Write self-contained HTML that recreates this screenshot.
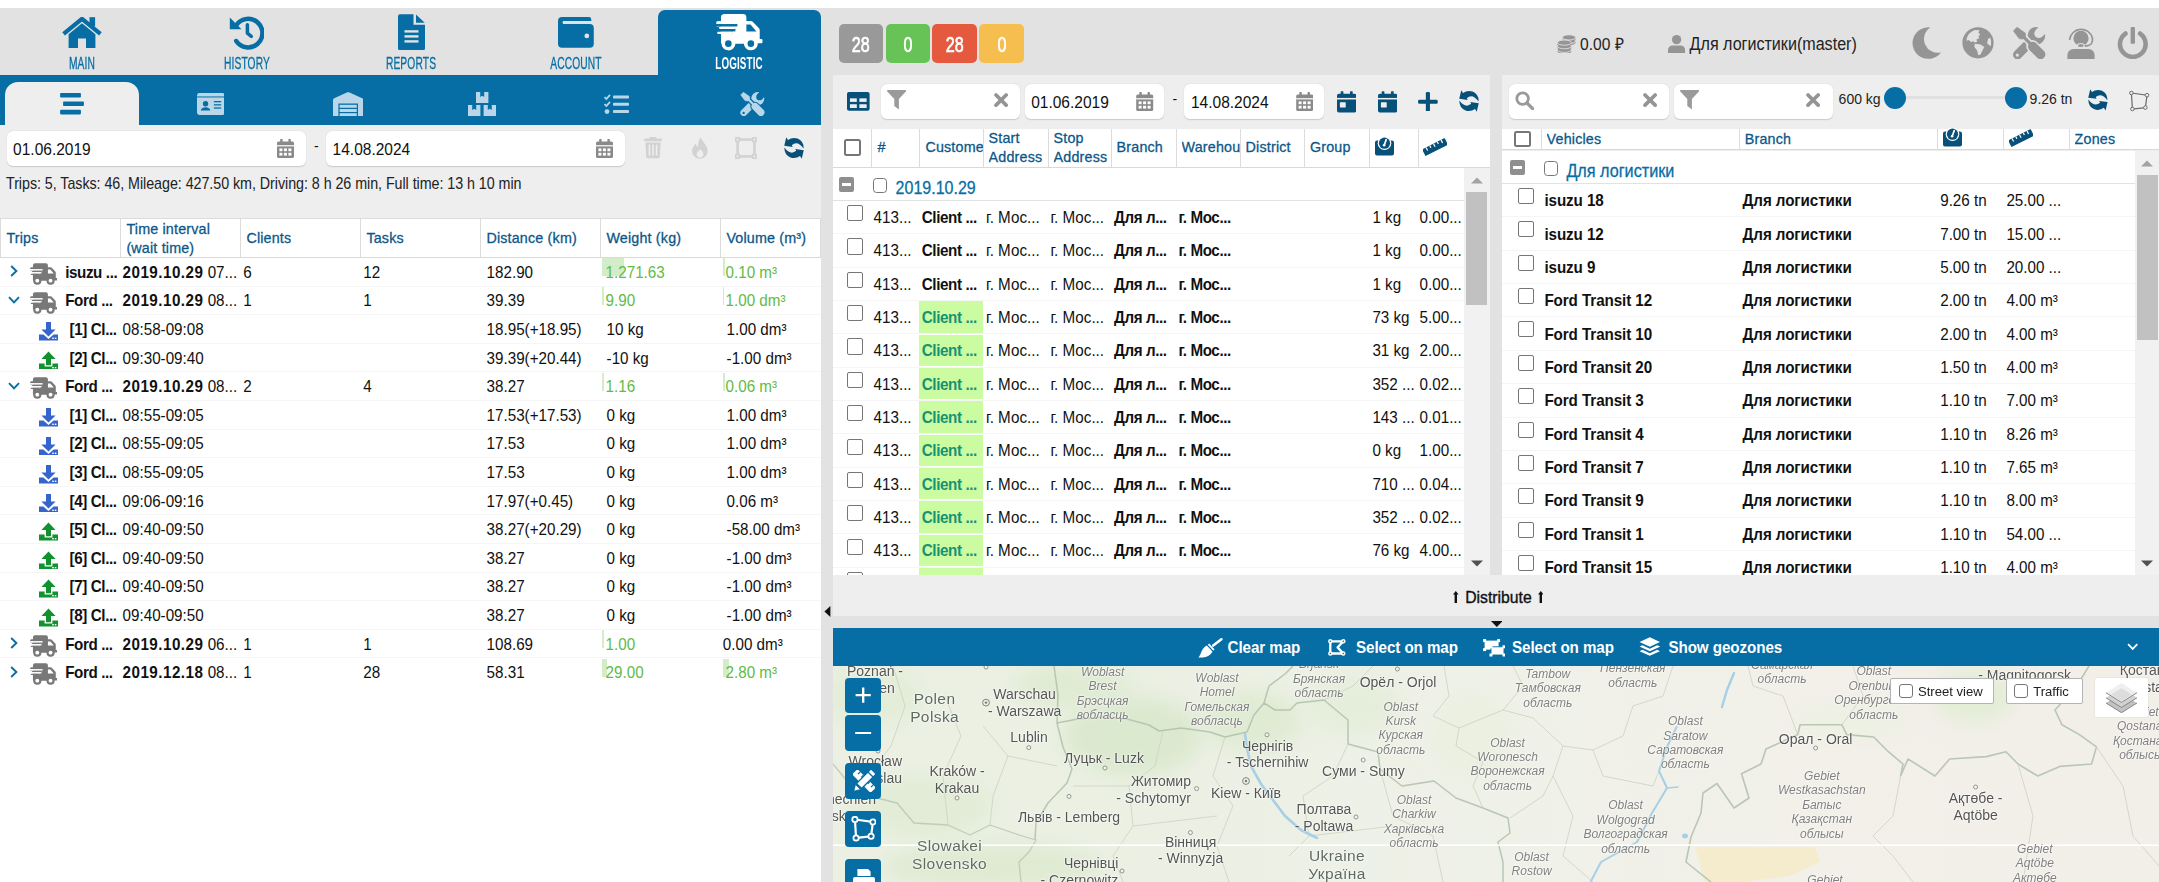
<!DOCTYPE html><html><head><meta charset="utf-8"><title>Logistic</title><style>
*{box-sizing:border-box}
html,body{margin:0;padding:0}
body{width:2159px;height:882px;position:relative;overflow:hidden;background:#fff;font-family:"Liberation Sans",sans-serif;font-size:15.2px;color:#111}
.abs{position:absolute}
.navlbl{position:absolute;top:52.6px;width:164px;text-align:center;font-size:16.4px;line-height:20px;color:#066ea5;-webkit-text-stroke:.3px #066ea5;transform:scaleX(.625);transform-origin:50% 50%;white-space:nowrap;letter-spacing:.2px}
.inp{position:absolute;background:#fff;border:none;box-shadow:0 .5px 1.2px rgba(0,0,0,.16);border-radius:6px;font-size:15.5px;line-height:36px;padding-left:6.6px;color:#111;white-space:nowrap}
.hd{position:absolute;font-size:14.3px;color:#0b5788;-webkit-text-stroke:.28px #0b5788;white-space:nowrap;overflow:hidden;line-height:18.7px;letter-spacing:.18px;transform:translateY(.6px)}
.vl{position:absolute;width:1px;background:#dcdcdc}
.hl{position:absolute;height:1px;background:#f5f5f5}
.c{position:absolute;white-space:nowrap;line-height:20px;font-size:15.2px;transform:translateY(1.3px) scaleY(1.1);transform-origin:0 14.6px}
.b{font-weight:bold;letter-spacing:-.08px}
.e{letter-spacing:-.4px}
.g{color:#62bb46}
.cb{position:absolute;width:16.5px;height:16.5px;border:1.7px solid #767676;border-radius:2.5px;background:#fff}
.cbs{position:absolute;width:14.5px;height:14.5px;border:1.4px solid #767676;border-radius:2.5px;background:#fff}
.badge{position:absolute;top:24px;height:38.5px;width:44px;border-radius:5px;color:#fff;text-align:center;font-size:21.2px;line-height:41px}
.badge span{display:inline-block;transform:scaleX(.76);-webkit-text-stroke:.7px #fff}
.mapbtn{position:absolute;left:845.4px;width:35.5px;height:35.5px;background:#066ea5;border-radius:4px}
.ml{position:absolute;white-space:nowrap;text-align:center;text-shadow:0 0 2px #fff,0 0 2px #fff;color:#555;font-size:14px;line-height:16.5px;transform:translateX(-50%)}
.mi{position:absolute;white-space:nowrap;text-align:center;text-shadow:0 0 2px #fff,0 0 2px #fff;color:#808080;font-style:italic;font-size:12px;line-height:14.4px;transform:translateX(-50%)}
.mb{position:absolute;white-space:nowrap;text-align:center;text-shadow:0 0 2px #fff,0 0 2px #fff;letter-spacing:.4px;color:#5d6b60;font-size:15.5px;line-height:18px;transform:translateX(-50%)}
</style></head><body>
<div class="abs" style="left:0;top:8px;width:2159px;height:67px;background:#e2e2e2"></div>
<div class="abs" style="left:658px;top:10px;width:163px;height:66px;background:#066ea5;border-radius:7px 7px 0 0"></div>
<div class="abs" style="left:0;top:74.6px;width:821px;height:50.4px;background:#066ea5"></div>
<div class="abs" style="left:0;top:125px;width:821px;height:93px;background:#eeeeee"></div>
<svg style="position:absolute;left:62.4px;top:16.8px" width="40" height="31" viewBox="0 0 40 31" ><path d="M20 6.2 L33.4 17.2 V31 H24 V21.5 H16 V31 H6.6 V17.2 Z" fill="#066ea5"/><path d="M1.6 16.8 L20 1.8 L38.4 16.8" fill="none" stroke="#066ea5" stroke-width="4.2" stroke-linejoin="miter"/><rect x="27.5" y="0.2" width="5.6" height="9" fill="#066ea5"/></svg>
<svg style="position:absolute;left:228.6px;top:14.8px" width="35.6" height="35.2" viewBox="0 0 36 36" ><path d="M7.4 10.2 A14.6 14.6 0 1 1 7.2 26.6" fill="none" stroke="#066ea5" stroke-width="4.6" stroke-linecap="round"/><path d="M0.6 2.6 V14.6 H12.6 Z" fill="#066ea5"/><path d="M18.6 10 V18.6 L22.6 21.8" fill="none" stroke="#066ea5" stroke-width="3.6" stroke-linecap="round" stroke-linejoin="round"/></svg>
<svg style="position:absolute;left:398px;top:14px" width="27" height="36.4" viewBox="0 0 27 36" ><path d="M2 0 H15.5 V10.5 H27 V34 a2 2 0 0 1 -2 2 H2 a2 2 0 0 1 -2 -2 V2 a2 2 0 0 1 2 -2 Z" fill="#066ea5"/><path d="M18 0.3 L26.7 8.6 H18 Z" fill="#066ea5"/><rect x="6.5" y="16" width="14" height="2.4" fill="#e2e2e2"/><rect x="6.5" y="21" width="14" height="2.4" fill="#e2e2e2"/><rect x="6.5" y="26" width="14" height="2.4" fill="#e2e2e2"/></svg>
<svg style="position:absolute;left:558px;top:17px" width="35.8" height="30.8" viewBox="0 0 36 31" ><path d="M4 0 H31 a2.5 2.5 0 0 1 2.5 2.5 V4 H5 V7 H32 a4 4 0 0 1 4 4 V27 a4 4 0 0 1 -4 4 H4 a4 4 0 0 1 -4 -4 V4 a4 4 0 0 1 4 -4 Z" fill="#066ea5"/><rect x="4.5" y="4.4" width="29" height="2.2" rx="1.1" fill="#e2e2e2"/><circle cx="29" cy="19" r="2.4" fill="#e2e2e2"/></svg>
<svg style="position:absolute;left:716px;top:14px" width="46.8" height="37" viewBox="0 0 47 37" ><path d="M8 0 H27 a3.5 3.5 0 0 1 3.5 3.5 V7 H35 a3 3 0 0 1 2.1 0.9 L43 14 a3 3 0 0 1 0.9 2.1 V25 H45.5 a1.2 1.2 0 0 1 1.2 1.2 V28 a1.2 1.2 0 0 1 -1.2 1.2 H42 a7 7 0 0 1 -14 0.5 H19.5 a7 7 0 0 1 -14 -0.5 H5 V20 H17 V17.6 H3.5 V15 H19.5 V12.6 H1.5 a1.2 1.2 0 0 1 -1.2 -1.2 V8.4 a1.2 1.2 0 0 1 1.2 -1.2 H5 V3.5 A3.5 3.5 0 0 1 8 0 Z" fill="#fff"/><rect x="1.2" y="7.4" width="20.5" height="2.6" rx="1.3" fill="#fff"/><rect x="3" y="12.4" width="17" height="2.6" rx="1.3" fill="#fff"/><rect x="1.2" y="17.4" width="16" height="2.6" rx="1.3" fill="#fff"/><rect x="2.5" y="10" width="19" height="2.4" fill="#066ea5"/><rect x="2.5" y="15" width="17" height="2.4" fill="#066ea5"/><rect x="0" y="10" width="4.9" height="2.4" fill="#066ea5"/><rect x="0" y="15" width="4.9" height="2.4" fill="#066ea5"/><path d="M30.5 10.5 H34.6 L40.6 17.6 H30.5 Z" fill="#066ea5"/><circle cx="12.4" cy="29.7" r="3.3" fill="#066ea5"/><circle cx="35" cy="29.7" r="3.3" fill="#066ea5"/></svg>
<div class="navlbl" style="left:0.20000000000000284px">MAIN</div>
<div class="navlbl" style="left:164.6px">HISTORY</div>
<div class="navlbl" style="left:329px">REPORTS</div>
<div class="navlbl" style="left:493.6px">ACCOUNT</div>
<div class="navlbl" style="left:657.4px;color:#fff;-webkit-text-stroke:0;font-weight:bold;transform:scaleX(.6)">LOGISTIC</div>
<div class="abs" style="left:5px;top:81.8px;width:134px;height:44px;background:#eeeeee;border-radius:13px 13px 0 0"></div>
<svg style="position:absolute;left:60px;top:93.2px" width="24" height="21.4" viewBox="0 0 24 21.6" ><rect x="0" y="0" width="21" height="4.6" rx="0.8" fill="#066ea5"/><rect x="3" y="8.5" width="21" height="4.6" rx="0.8" fill="#066ea5"/><rect x="0" y="17" width="21" height="4.6" rx="0.8" fill="#066ea5"/></svg>
<svg style="position:absolute;left:196.5px;top:93px" width="27.8" height="22" viewBox="0 0 28 22" ><rect x="0" y="0" width="28" height="22" rx="2.4" fill="#b9d7e9"/><rect x="0" y="3.4" width="28" height="1" fill="#066ea5"/><circle cx="8.6" cy="10.8" r="2.7" fill="#066ea5"/><path d="M3.8 17.6 a4.8 3.4 0 0 1 9.6 0 Z" fill="#066ea5"/><rect x="17" y="8" width="7.4" height="1.3" fill="#066ea5"/><rect x="17" y="11.2" width="7.4" height="1.3" fill="#066ea5"/><rect x="17" y="14.4" width="7.4" height="1.3" fill="#066ea5"/></svg>
<svg style="position:absolute;left:333px;top:91.6px" width="30.4" height="24.5" viewBox="0 0 30.4 24.5" ><path d="M0 24.5 V8 a2 2 0 0 1 1.2 -1.8 L14.4 0.3 a2 2 0 0 1 1.6 0 L29.2 6.2 A2 2 0 0 1 30.4 8 V24.5 H25 V11.5 H5.4 V24.5 Z" fill="#b9d7e9"/><rect x="6.6" y="12.8" width="17.2" height="3" fill="#b9d7e9"/><rect x="6.6" y="17" width="17.2" height="3" fill="#b9d7e9"/><rect x="6.6" y="21.2" width="17.2" height="3.3" fill="#b9d7e9"/></svg>
<svg style="position:absolute;left:468px;top:92px" width="28" height="24" viewBox="0 0 28 24" ><path d="M8 0 h4.2 v5 l2 -1.2 l2 1.2 v-5 h4.2 v11 h-12.4 Z" fill="#b9d7e9"/><path d="M0 13 h4.2 v5 l2 -1.2 l2 1.2 v-5 h4.2 v11 h-12.4 Z" fill="#b9d7e9"/><path d="M15.6 13 h4.2 v5 l2 -1.2 l2 1.2 v-5 h4.2 v11 h-12.4 Z" fill="#b9d7e9"/></svg>
<svg style="position:absolute;left:604px;top:94.2px" width="25" height="20" viewBox="0 0 25 20" ><rect x="9" y="1.6" width="16" height="3" rx="0.8" fill="#b9d7e9"/><rect x="9" y="8.8" width="16" height="3" rx="0.8" fill="#b9d7e9"/><rect x="9" y="16" width="16" height="3" rx="0.8" fill="#b9d7e9"/><path d="M0.6 3 L2.4 5 L6 0.8" fill="none" stroke="#b9d7e9" stroke-width="1.8"/><path d="M0.6 10 L2.4 12 L6 7.8" fill="none" stroke="#b9d7e9" stroke-width="1.8"/><circle cx="3" cy="17.6" r="2.4" fill="#b9d7e9"/></svg>
<svg style="position:absolute;left:740px;top:92px" width="25" height="24" viewBox="0 0 32.6 32.3" ><path d="M4.6 27.8 L21 11.2" stroke="#b9d7e9" stroke-width="9.2" stroke-linecap="round" fill="none"/><circle cx="23.4" cy="8.8" r="8.8" fill="#b9d7e9"/><circle cx="25.8" cy="6.6" r="4.5" fill="#066ea5"/><path d="M22.4 3.6 L27.2 -2 L34 5 L28.8 10 Z" fill="#066ea5"/><circle cx="4.3" cy="28.1" r="1.6" fill="#066ea5"/><path d="M10 9 L19.4 18.8" stroke="#066ea5" stroke-width="6.4" fill="none"/><path d="M19.4 19.2 L27.8 27.6" stroke="#066ea5" stroke-width="12.4" stroke-linecap="round" fill="none"/><path d="M4 0.3 L12.3 6.2 V9.6 L9.6 12 L6.2 11.6 L0.5 3.9 Z" fill="#b9d7e9" stroke="#b9d7e9" stroke-width="0.8" stroke-linejoin="round"/><path d="M10.6 9.8 L19.4 18.8" stroke="#b9d7e9" stroke-width="3.2" fill="none"/><path d="M19.8 19.6 L27.6 27.4" stroke="#b9d7e9" stroke-width="9.6" stroke-linecap="round" fill="none"/></svg>
<div class="inp" style="left:6.5px;top:131.2px;width:299px;height:35.2px"></div><div class="c" style="left:13.1px;top:138.9px;font-size:15.5px">01.06.2019</div>
<div class="inp" style="left:326px;top:131.2px;width:298.5px;height:35.2px"></div><div class="c" style="left:332.6px;top:138.9px;font-size:15.5px">14.08.2024</div>
<svg style="position:absolute;left:277px;top:139.4px" width="17" height="19" viewBox="0 0 17 19" ><rect x="0" y="2.4" width="17" height="16.6" rx="1.6" fill="#8a8a8a"/><rect x="3.2" y="0" width="2.4" height="4.6" rx="0.6" fill="#8a8a8a"/><rect x="11.4" y="0" width="2.4" height="4.6" rx="0.6" fill="#8a8a8a"/><rect x="0" y="6.2" width="17" height="1.2" fill="#fff"/><rect x="2.4" y="9.4" width="3" height="2.8" fill="#fff"/><rect x="6.9" y="9.4" width="3" height="2.8" fill="#fff"/><rect x="11.4" y="9.4" width="3" height="2.8" fill="#fff"/><rect x="2.4" y="13.8" width="3" height="2.8" fill="#fff"/><rect x="6.9" y="13.8" width="3" height="2.8" fill="#fff"/><rect x="11.4" y="13.8" width="3" height="2.8" fill="#fff"/></svg>
<svg style="position:absolute;left:596.4px;top:139.4px" width="17" height="19" viewBox="0 0 17 19" ><rect x="0" y="2.4" width="17" height="16.6" rx="1.6" fill="#8a8a8a"/><rect x="3.2" y="0" width="2.4" height="4.6" rx="0.6" fill="#8a8a8a"/><rect x="11.4" y="0" width="2.4" height="4.6" rx="0.6" fill="#8a8a8a"/><rect x="0" y="6.2" width="17" height="1.2" fill="#fff"/><rect x="2.4" y="9.4" width="3" height="2.8" fill="#fff"/><rect x="6.9" y="9.4" width="3" height="2.8" fill="#fff"/><rect x="11.4" y="9.4" width="3" height="2.8" fill="#fff"/><rect x="2.4" y="13.8" width="3" height="2.8" fill="#fff"/><rect x="6.9" y="13.8" width="3" height="2.8" fill="#fff"/><rect x="11.4" y="13.8" width="3" height="2.8" fill="#fff"/></svg>
<div class="c" style="left:314px;top:135px;font-size:14px">-</div>
<svg style="position:absolute;left:644px;top:137.2px" width="18" height="21.4" viewBox="0 0 18 21.4" ><rect x="0" y="1.6" width="18" height="2.6" rx="0.8" fill="#d2d2d2"/><rect x="5.6" y="0" width="6.8" height="2.6" rx="0.8" fill="#d2d2d2"/><path d="M1.4 5.6 H16.6 L15.8 19.6 a1.6 1.6 0 0 1 -1.6 1.6 H3.8 a1.6 1.6 0 0 1 -1.6 -1.6 Z" fill="#d2d2d2"/><rect x="4.6" y="7.6" width="1.6" height="11" fill="#eeeeee"/><rect x="8.2" y="7.6" width="1.6" height="11" fill="#eeeeee"/><rect x="11.8" y="7.6" width="1.6" height="11" fill="#eeeeee"/></svg>
<svg style="position:absolute;left:692px;top:137px" width="15.6" height="21.8" viewBox="0 0 15.6 21.8" ><path d="M8.6 0 C9.4 4 15.6 8 15.6 14 A7.8 7.8 0 0 1 0 14 C0 10.6 2.2 8.2 4 6.4 C4.2 8.6 5 9.6 6 10.2 C6 6 7 2.6 8.6 0 Z" fill="#d2d2d2"/><path d="M8.2 12 C10.4 14 11.4 15.4 11.4 17 A3.4 3.4 0 0 1 4.6 17 C4.6 15.4 6.6 14.6 8.2 12 Z" fill="#eeeeee"/></svg>
<svg style="position:absolute;left:735.4px;top:137px" width="22" height="22" viewBox="0 0 22 22" ><rect x="2.6" y="2.6" width="16.8" height="16.8" fill="none" stroke="#d2d2d2" stroke-width="2.6"/><rect x="0" y="0" width="5.2" height="5.2" rx="0.8" fill="#d2d2d2"/><rect x="1.7" y="1.7" width="1.8" height="1.8" fill="#eeeeee"/><rect x="16.8" y="0" width="5.2" height="5.2" rx="0.8" fill="#d2d2d2"/><rect x="18.5" y="1.7" width="1.8" height="1.8" fill="#eeeeee"/><rect x="0" y="16.8" width="5.2" height="5.2" rx="0.8" fill="#d2d2d2"/><rect x="1.7" y="18.5" width="1.8" height="1.8" fill="#eeeeee"/><rect x="16.8" y="16.8" width="5.2" height="5.2" rx="0.8" fill="#d2d2d2"/><rect x="18.5" y="18.5" width="1.8" height="1.8" fill="#eeeeee"/></svg>
<svg style="position:absolute;left:783.6px;top:137px" width="20" height="22" viewBox="0 0 19.8 21.9" ><path d="M2.2 0.2 L0.2 8.8 L8.6 9.9 L7.7 8.1 Q11.6 4.8 15.8 7.6 Q18 9.2 19.4 11.4 Q19.9 4.4 13.4 1.5 Q8.4 -0.2 3.9 3 Z" fill="#07507a"/><path d="M2.2 0.2 L0.2 8.8 L8.6 9.9 L7.7 8.1 Q11.6 4.8 15.8 7.6 Q18 9.2 19.4 11.4 Q19.9 4.4 13.4 1.5 Q8.4 -0.2 3.9 3 Z" fill="#07507a" transform="rotate(180 9.9 10.95)"/></svg>
<div class="c" style="left:6px;top:173px;font-size:14.3px;color:#222;letter-spacing:-.05px">Trips: 5, Tasks: 46, Mileage: 427.50 km, Driving: 8 h 26 min, Full time: 13 h 10 min</div>
<div class="abs" style="left:0;top:218px;width:821px;height:39.6px;background:#fff;border-top:1px solid #dcdcdc;border-bottom:1.6px solid #d9d9d9"></div>
<div class="vl" style="left:0px;top:218px;height:39px"></div>
<div class="vl" style="left:120px;top:218px;height:39px"></div>
<div class="vl" style="left:240px;top:218px;height:39px"></div>
<div class="vl" style="left:360px;top:218px;height:39px"></div>
<div class="vl" style="left:480px;top:218px;height:39px"></div>
<div class="vl" style="left:600px;top:218px;height:39px"></div>
<div class="vl" style="left:720px;top:218px;height:39px"></div>
<div class="vl" style="left:820px;top:218px;height:39px"></div>
<div class="hd" style="left:6.4px;top:228.4px">Trips</div>
<div class="hd" style="left:126.4px;top:219.4px">Time interval<br>(wait time)</div>
<div class="hd" style="left:246.4px;top:228.4px">Clients</div>
<div class="hd" style="left:366.4px;top:228.4px">Tasks</div>
<div class="hd" style="left:486.4px;top:228.4px">Distance (km)</div>
<div class="hd" style="left:606.4px;top:228.4px">Weight (kg)</div>
<div class="hd" style="left:726.4px;top:228.4px">Volume (m³)</div>
<div class="hl" style="left:0;top:285.6px;width:821px"></div>
<svg style="position:absolute;left:9.6px;top:265.20000000000005px" width="8" height="12" viewBox="0 0 8 12" ><path d="M1.2 1 L6.4 6 L1.2 11" fill="none" stroke="#066ea5" stroke-width="1.9"/></svg>
<svg style="position:absolute;left:29.8px;top:263.0px" width="27.6" height="22.2" viewBox="0 0 47 37" ><path d="M8 0 H27 a3.5 3.5 0 0 1 3.5 3.5 V7 H35 a3 3 0 0 1 2.1 0.9 L43 14 a3 3 0 0 1 0.9 2.1 V25 H45.5 a1.2 1.2 0 0 1 1.2 1.2 V28 a1.2 1.2 0 0 1 -1.2 1.2 H42 a7 7 0 0 1 -14 0.5 H19.5 a7 7 0 0 1 -14 -0.5 H5 V20 H17 V17.6 H3.5 V15 H19.5 V12.6 H1.5 a1.2 1.2 0 0 1 -1.2 -1.2 V8.4 a1.2 1.2 0 0 1 1.2 -1.2 H5 V3.5 A3.5 3.5 0 0 1 8 0 Z" fill="#787878"/><rect x="1.2" y="7.4" width="20.5" height="2.6" rx="1.3" fill="#787878"/><rect x="3" y="12.4" width="17" height="2.6" rx="1.3" fill="#787878"/><rect x="1.2" y="17.4" width="16" height="2.6" rx="1.3" fill="#787878"/><rect x="2.5" y="10" width="19" height="2.4" fill="#fff"/><rect x="2.5" y="15" width="17" height="2.4" fill="#fff"/><rect x="0" y="10" width="4.9" height="2.4" fill="#fff"/><rect x="0" y="15" width="4.9" height="2.4" fill="#fff"/><path d="M30.5 10.5 H34.6 L40.6 17.6 H30.5 Z" fill="#fff"/><circle cx="12.4" cy="29.7" r="3.3" fill="#fff"/><circle cx="35" cy="29.7" r="3.3" fill="#fff"/></svg>
<div class="c b e" style="left:65.2px;top:261.8px">isuzu ...</div>
<div class="c" style="left:122.6px;top:261.8px"><b style="letter-spacing:.48px">2019.10.29</b> 07...</div>
<div class="c" style="left:243.2px;top:261.8px">6</div>
<div class="c" style="left:363.2px;top:261.8px">12</div>
<div class="c" style="left:486.6px;top:261.8px">182.90</div>
<div class="abs" style="left:602.4px;top:258.2px;width:22px;height:18px;background:#d3ecc9"></div>
<div class="c g" style="left:605.6px;top:261.8px">1.271.63</div>
<div class="abs" style="left:722.6px;top:258.2px;width:2px;height:18px;background:#d3ecc9"></div>
<div class="c g" style="left:725.6px;top:261.8px">0.10 m³</div>
<div class="hl" style="left:0;top:314.2px;width:821px"></div>
<svg style="position:absolute;left:7.6px;top:296.20000000000005px" width="12" height="8" viewBox="0 0 12 8" ><path d="M1 1.2 L6 6.4 L11 1.2" fill="none" stroke="#066ea5" stroke-width="1.9"/></svg>
<svg style="position:absolute;left:29.8px;top:291.6px" width="27.6" height="22.2" viewBox="0 0 47 37" ><path d="M8 0 H27 a3.5 3.5 0 0 1 3.5 3.5 V7 H35 a3 3 0 0 1 2.1 0.9 L43 14 a3 3 0 0 1 0.9 2.1 V25 H45.5 a1.2 1.2 0 0 1 1.2 1.2 V28 a1.2 1.2 0 0 1 -1.2 1.2 H42 a7 7 0 0 1 -14 0.5 H19.5 a7 7 0 0 1 -14 -0.5 H5 V20 H17 V17.6 H3.5 V15 H19.5 V12.6 H1.5 a1.2 1.2 0 0 1 -1.2 -1.2 V8.4 a1.2 1.2 0 0 1 1.2 -1.2 H5 V3.5 A3.5 3.5 0 0 1 8 0 Z" fill="#787878"/><rect x="1.2" y="7.4" width="20.5" height="2.6" rx="1.3" fill="#787878"/><rect x="3" y="12.4" width="17" height="2.6" rx="1.3" fill="#787878"/><rect x="1.2" y="17.4" width="16" height="2.6" rx="1.3" fill="#787878"/><rect x="2.5" y="10" width="19" height="2.4" fill="#fff"/><rect x="2.5" y="15" width="17" height="2.4" fill="#fff"/><rect x="0" y="10" width="4.9" height="2.4" fill="#fff"/><rect x="0" y="15" width="4.9" height="2.4" fill="#fff"/><path d="M30.5 10.5 H34.6 L40.6 17.6 H30.5 Z" fill="#fff"/><circle cx="12.4" cy="29.7" r="3.3" fill="#fff"/><circle cx="35" cy="29.7" r="3.3" fill="#fff"/></svg>
<div class="c b e" style="left:65.2px;top:290.4px">Ford ...</div>
<div class="c" style="left:122.6px;top:290.4px"><b style="letter-spacing:.48px">2019.10.29</b> 08...</div>
<div class="c" style="left:243.2px;top:290.4px">1</div>
<div class="c" style="left:363.2px;top:290.4px">1</div>
<div class="c" style="left:486.6px;top:290.4px">39.39</div>
<div class="abs" style="left:602.4px;top:286.8px;width:1.4px;height:18px;background:#d3ecc9"></div>
<div class="c g" style="left:605.6px;top:290.4px">9.90</div>
<div class="abs" style="left:722.6px;top:286.8px;width:1.4px;height:18px;background:#d3ecc9"></div>
<div class="c g" style="left:725.6px;top:290.4px">1.00 dm³</div>
<div class="hl" style="left:0;top:342.8px;width:821px"></div>
<svg style="position:absolute;left:38.8px;top:322.2px" width="19" height="18.6" viewBox="0 0 19 18.6" ><path d="M7 0 H12 V7.4 H16.6 L9.5 14.6 L2.4 7.4 H7 Z" fill="#3564cd"/><path d="M0 12.6 H4.4 L9.5 17 L14.6 12.6 H19 V18.6 H0 Z" fill="#3564cd"/><rect x="13.2" y="15.6" width="1.6" height="1.4" fill="#fff"/><rect x="15.8" y="15.6" width="1.6" height="1.4" fill="#fff"/></svg>
<div class="c b e" style="left:69.6px;top:319.0px">[1] Cl...</div>
<div class="c" style="left:122.6px;top:319.0px">08:58-09:08</div>
<div class="c" style="left:486.6px;top:319.0px">18.95(+18.95)</div>
<div class="c" style="left:606.6px;top:319.0px">10 kg</div>
<div class="c" style="left:726.6px;top:319.0px">1.00 dm³</div>
<div class="hl" style="left:0;top:371.4px;width:821px"></div>
<svg style="position:absolute;left:38.8px;top:350.6px" width="19" height="18.6" viewBox="0 0 19 18.6" ><path d="M7 14.2 H12 V8 H16.6 L9.5 0.4 L2.4 8 H7 Z" fill="#12922e"/><path d="M0 12.6 H5.6 V15.6 H13.4 V12.6 H19 V18.6 H0 Z" fill="#12922e"/><rect x="13.2" y="16" width="1.6" height="1.4" fill="#fff"/><rect x="15.8" y="16" width="1.6" height="1.4" fill="#fff"/></svg>
<div class="c b e" style="left:69.6px;top:347.6px">[2] Cl...</div>
<div class="c" style="left:122.6px;top:347.6px">09:30-09:40</div>
<div class="c" style="left:486.6px;top:347.6px">39.39(+20.44)</div>
<div class="c" style="left:606.6px;top:347.6px">-10 kg</div>
<div class="c" style="left:726.6px;top:347.6px">-1.00 dm³</div>
<div class="hl" style="left:0;top:400.0px;width:821px"></div>
<svg style="position:absolute;left:7.6px;top:382.0px" width="12" height="8" viewBox="0 0 12 8" ><path d="M1 1.2 L6 6.4 L11 1.2" fill="none" stroke="#066ea5" stroke-width="1.9"/></svg>
<svg style="position:absolute;left:29.8px;top:377.4px" width="27.6" height="22.2" viewBox="0 0 47 37" ><path d="M8 0 H27 a3.5 3.5 0 0 1 3.5 3.5 V7 H35 a3 3 0 0 1 2.1 0.9 L43 14 a3 3 0 0 1 0.9 2.1 V25 H45.5 a1.2 1.2 0 0 1 1.2 1.2 V28 a1.2 1.2 0 0 1 -1.2 1.2 H42 a7 7 0 0 1 -14 0.5 H19.5 a7 7 0 0 1 -14 -0.5 H5 V20 H17 V17.6 H3.5 V15 H19.5 V12.6 H1.5 a1.2 1.2 0 0 1 -1.2 -1.2 V8.4 a1.2 1.2 0 0 1 1.2 -1.2 H5 V3.5 A3.5 3.5 0 0 1 8 0 Z" fill="#787878"/><rect x="1.2" y="7.4" width="20.5" height="2.6" rx="1.3" fill="#787878"/><rect x="3" y="12.4" width="17" height="2.6" rx="1.3" fill="#787878"/><rect x="1.2" y="17.4" width="16" height="2.6" rx="1.3" fill="#787878"/><rect x="2.5" y="10" width="19" height="2.4" fill="#fff"/><rect x="2.5" y="15" width="17" height="2.4" fill="#fff"/><rect x="0" y="10" width="4.9" height="2.4" fill="#fff"/><rect x="0" y="15" width="4.9" height="2.4" fill="#fff"/><path d="M30.5 10.5 H34.6 L40.6 17.6 H30.5 Z" fill="#fff"/><circle cx="12.4" cy="29.7" r="3.3" fill="#fff"/><circle cx="35" cy="29.7" r="3.3" fill="#fff"/></svg>
<div class="c b e" style="left:65.2px;top:376.2px">Ford ...</div>
<div class="c" style="left:122.6px;top:376.2px"><b style="letter-spacing:.48px">2019.10.29</b> 08...</div>
<div class="c" style="left:243.2px;top:376.2px">2</div>
<div class="c" style="left:363.2px;top:376.2px">4</div>
<div class="c" style="left:486.6px;top:376.2px">38.27</div>
<div class="abs" style="left:602.4px;top:372.6px;width:1.4px;height:18px;background:#d3ecc9"></div>
<div class="c g" style="left:605.6px;top:376.2px">1.16</div>
<div class="abs" style="left:722.6px;top:372.6px;width:2px;height:18px;background:#d3ecc9"></div>
<div class="c g" style="left:725.6px;top:376.2px">0.06 m³</div>
<div class="hl" style="left:0;top:428.6px;width:821px"></div>
<svg style="position:absolute;left:38.8px;top:408.0px" width="19" height="18.6" viewBox="0 0 19 18.6" ><path d="M7 0 H12 V7.4 H16.6 L9.5 14.6 L2.4 7.4 H7 Z" fill="#3564cd"/><path d="M0 12.6 H4.4 L9.5 17 L14.6 12.6 H19 V18.6 H0 Z" fill="#3564cd"/><rect x="13.2" y="15.6" width="1.6" height="1.4" fill="#fff"/><rect x="15.8" y="15.6" width="1.6" height="1.4" fill="#fff"/></svg>
<div class="c b e" style="left:69.6px;top:404.8px">[1] Cl...</div>
<div class="c" style="left:122.6px;top:404.8px">08:55-09:05</div>
<div class="c" style="left:486.6px;top:404.8px">17.53(+17.53)</div>
<div class="c" style="left:606.6px;top:404.8px">0 kg</div>
<div class="c" style="left:726.6px;top:404.8px">1.00 dm³</div>
<div class="hl" style="left:0;top:457.2px;width:821px"></div>
<svg style="position:absolute;left:38.8px;top:436.6px" width="19" height="18.6" viewBox="0 0 19 18.6" ><path d="M7 0 H12 V7.4 H16.6 L9.5 14.6 L2.4 7.4 H7 Z" fill="#3564cd"/><path d="M0 12.6 H4.4 L9.5 17 L14.6 12.6 H19 V18.6 H0 Z" fill="#3564cd"/><rect x="13.2" y="15.6" width="1.6" height="1.4" fill="#fff"/><rect x="15.8" y="15.6" width="1.6" height="1.4" fill="#fff"/></svg>
<div class="c b e" style="left:69.6px;top:433.4px">[2] Cl...</div>
<div class="c" style="left:122.6px;top:433.4px">08:55-09:05</div>
<div class="c" style="left:486.6px;top:433.4px">17.53</div>
<div class="c" style="left:606.6px;top:433.4px">0 kg</div>
<div class="c" style="left:726.6px;top:433.4px">1.00 dm³</div>
<div class="hl" style="left:0;top:485.8px;width:821px"></div>
<svg style="position:absolute;left:38.8px;top:465.20000000000005px" width="19" height="18.6" viewBox="0 0 19 18.6" ><path d="M7 0 H12 V7.4 H16.6 L9.5 14.6 L2.4 7.4 H7 Z" fill="#3564cd"/><path d="M0 12.6 H4.4 L9.5 17 L14.6 12.6 H19 V18.6 H0 Z" fill="#3564cd"/><rect x="13.2" y="15.6" width="1.6" height="1.4" fill="#fff"/><rect x="15.8" y="15.6" width="1.6" height="1.4" fill="#fff"/></svg>
<div class="c b e" style="left:69.6px;top:462.0px">[3] Cl...</div>
<div class="c" style="left:122.6px;top:462.0px">08:55-09:05</div>
<div class="c" style="left:486.6px;top:462.0px">17.53</div>
<div class="c" style="left:606.6px;top:462.0px">0 kg</div>
<div class="c" style="left:726.6px;top:462.0px">1.00 dm³</div>
<div class="hl" style="left:0;top:514.4px;width:821px"></div>
<svg style="position:absolute;left:38.8px;top:493.8px" width="19" height="18.6" viewBox="0 0 19 18.6" ><path d="M7 0 H12 V7.4 H16.6 L9.5 14.6 L2.4 7.4 H7 Z" fill="#3564cd"/><path d="M0 12.6 H4.4 L9.5 17 L14.6 12.6 H19 V18.6 H0 Z" fill="#3564cd"/><rect x="13.2" y="15.6" width="1.6" height="1.4" fill="#fff"/><rect x="15.8" y="15.6" width="1.6" height="1.4" fill="#fff"/></svg>
<div class="c b e" style="left:69.6px;top:490.6px">[4] Cl...</div>
<div class="c" style="left:122.6px;top:490.6px">09:06-09:16</div>
<div class="c" style="left:486.6px;top:490.6px">17.97(+0.45)</div>
<div class="c" style="left:606.6px;top:490.6px">0 kg</div>
<div class="c" style="left:726.6px;top:490.6px">0.06 m³</div>
<div class="hl" style="left:0;top:543.0px;width:821px"></div>
<svg style="position:absolute;left:38.8px;top:522.2px" width="19" height="18.6" viewBox="0 0 19 18.6" ><path d="M7 14.2 H12 V8 H16.6 L9.5 0.4 L2.4 8 H7 Z" fill="#12922e"/><path d="M0 12.6 H5.6 V15.6 H13.4 V12.6 H19 V18.6 H0 Z" fill="#12922e"/><rect x="13.2" y="16" width="1.6" height="1.4" fill="#fff"/><rect x="15.8" y="16" width="1.6" height="1.4" fill="#fff"/></svg>
<div class="c b e" style="left:69.6px;top:519.2px">[5] Cl...</div>
<div class="c" style="left:122.6px;top:519.2px">09:40-09:50</div>
<div class="c" style="left:486.6px;top:519.2px">38.27(+20.29)</div>
<div class="c" style="left:606.6px;top:519.2px">0 kg</div>
<div class="c" style="left:726.6px;top:519.2px">-58.00 dm³</div>
<div class="hl" style="left:0;top:571.6px;width:821px"></div>
<svg style="position:absolute;left:38.8px;top:550.8000000000001px" width="19" height="18.6" viewBox="0 0 19 18.6" ><path d="M7 14.2 H12 V8 H16.6 L9.5 0.4 L2.4 8 H7 Z" fill="#12922e"/><path d="M0 12.6 H5.6 V15.6 H13.4 V12.6 H19 V18.6 H0 Z" fill="#12922e"/><rect x="13.2" y="16" width="1.6" height="1.4" fill="#fff"/><rect x="15.8" y="16" width="1.6" height="1.4" fill="#fff"/></svg>
<div class="c b e" style="left:69.6px;top:547.8px">[6] Cl...</div>
<div class="c" style="left:122.6px;top:547.8px">09:40-09:50</div>
<div class="c" style="left:486.6px;top:547.8px">38.27</div>
<div class="c" style="left:606.6px;top:547.8px">0 kg</div>
<div class="c" style="left:726.6px;top:547.8px">-1.00 dm³</div>
<div class="hl" style="left:0;top:600.2px;width:821px"></div>
<svg style="position:absolute;left:38.8px;top:579.4000000000001px" width="19" height="18.6" viewBox="0 0 19 18.6" ><path d="M7 14.2 H12 V8 H16.6 L9.5 0.4 L2.4 8 H7 Z" fill="#12922e"/><path d="M0 12.6 H5.6 V15.6 H13.4 V12.6 H19 V18.6 H0 Z" fill="#12922e"/><rect x="13.2" y="16" width="1.6" height="1.4" fill="#fff"/><rect x="15.8" y="16" width="1.6" height="1.4" fill="#fff"/></svg>
<div class="c b e" style="left:69.6px;top:576.4px">[7] Cl...</div>
<div class="c" style="left:122.6px;top:576.4px">09:40-09:50</div>
<div class="c" style="left:486.6px;top:576.4px">38.27</div>
<div class="c" style="left:606.6px;top:576.4px">0 kg</div>
<div class="c" style="left:726.6px;top:576.4px">-1.00 dm³</div>
<div class="hl" style="left:0;top:628.8px;width:821px"></div>
<svg style="position:absolute;left:38.8px;top:608.0000000000001px" width="19" height="18.6" viewBox="0 0 19 18.6" ><path d="M7 14.2 H12 V8 H16.6 L9.5 0.4 L2.4 8 H7 Z" fill="#12922e"/><path d="M0 12.6 H5.6 V15.6 H13.4 V12.6 H19 V18.6 H0 Z" fill="#12922e"/><rect x="13.2" y="16" width="1.6" height="1.4" fill="#fff"/><rect x="15.8" y="16" width="1.6" height="1.4" fill="#fff"/></svg>
<div class="c b e" style="left:69.6px;top:605.0px">[8] Cl...</div>
<div class="c" style="left:122.6px;top:605.0px">09:40-09:50</div>
<div class="c" style="left:486.6px;top:605.0px">38.27</div>
<div class="c" style="left:606.6px;top:605.0px">0 kg</div>
<div class="c" style="left:726.6px;top:605.0px">-1.00 dm³</div>
<div class="hl" style="left:0;top:657.4px;width:821px"></div>
<svg style="position:absolute;left:9.6px;top:637.0000000000001px" width="8" height="12" viewBox="0 0 8 12" ><path d="M1.2 1 L6.4 6 L1.2 11" fill="none" stroke="#066ea5" stroke-width="1.9"/></svg>
<svg style="position:absolute;left:29.8px;top:634.8000000000001px" width="27.6" height="22.2" viewBox="0 0 47 37" ><path d="M8 0 H27 a3.5 3.5 0 0 1 3.5 3.5 V7 H35 a3 3 0 0 1 2.1 0.9 L43 14 a3 3 0 0 1 0.9 2.1 V25 H45.5 a1.2 1.2 0 0 1 1.2 1.2 V28 a1.2 1.2 0 0 1 -1.2 1.2 H42 a7 7 0 0 1 -14 0.5 H19.5 a7 7 0 0 1 -14 -0.5 H5 V20 H17 V17.6 H3.5 V15 H19.5 V12.6 H1.5 a1.2 1.2 0 0 1 -1.2 -1.2 V8.4 a1.2 1.2 0 0 1 1.2 -1.2 H5 V3.5 A3.5 3.5 0 0 1 8 0 Z" fill="#787878"/><rect x="1.2" y="7.4" width="20.5" height="2.6" rx="1.3" fill="#787878"/><rect x="3" y="12.4" width="17" height="2.6" rx="1.3" fill="#787878"/><rect x="1.2" y="17.4" width="16" height="2.6" rx="1.3" fill="#787878"/><rect x="2.5" y="10" width="19" height="2.4" fill="#fff"/><rect x="2.5" y="15" width="17" height="2.4" fill="#fff"/><rect x="0" y="10" width="4.9" height="2.4" fill="#fff"/><rect x="0" y="15" width="4.9" height="2.4" fill="#fff"/><path d="M30.5 10.5 H34.6 L40.6 17.6 H30.5 Z" fill="#fff"/><circle cx="12.4" cy="29.7" r="3.3" fill="#fff"/><circle cx="35" cy="29.7" r="3.3" fill="#fff"/></svg>
<div class="c b e" style="left:65.2px;top:633.6px">Ford ...</div>
<div class="c" style="left:122.6px;top:633.6px"><b style="letter-spacing:.48px">2019.10.29</b> 06...</div>
<div class="c" style="left:243.2px;top:633.6px">1</div>
<div class="c" style="left:363.2px;top:633.6px">1</div>
<div class="c" style="left:486.6px;top:633.6px">108.69</div>
<div class="abs" style="left:602.4px;top:630.0px;width:1.4px;height:18px;background:#d3ecc9"></div>
<div class="c g" style="left:605.6px;top:633.6px">1.00</div>
<div class="c" style="left:722.8px;top:633.6px">0.00 dm³</div>
<svg style="position:absolute;left:9.6px;top:665.6px" width="8" height="12" viewBox="0 0 8 12" ><path d="M1.2 1 L6.4 6 L1.2 11" fill="none" stroke="#066ea5" stroke-width="1.9"/></svg>
<svg style="position:absolute;left:29.8px;top:663.4px" width="27.6" height="22.2" viewBox="0 0 47 37" ><path d="M8 0 H27 a3.5 3.5 0 0 1 3.5 3.5 V7 H35 a3 3 0 0 1 2.1 0.9 L43 14 a3 3 0 0 1 0.9 2.1 V25 H45.5 a1.2 1.2 0 0 1 1.2 1.2 V28 a1.2 1.2 0 0 1 -1.2 1.2 H42 a7 7 0 0 1 -14 0.5 H19.5 a7 7 0 0 1 -14 -0.5 H5 V20 H17 V17.6 H3.5 V15 H19.5 V12.6 H1.5 a1.2 1.2 0 0 1 -1.2 -1.2 V8.4 a1.2 1.2 0 0 1 1.2 -1.2 H5 V3.5 A3.5 3.5 0 0 1 8 0 Z" fill="#787878"/><rect x="1.2" y="7.4" width="20.5" height="2.6" rx="1.3" fill="#787878"/><rect x="3" y="12.4" width="17" height="2.6" rx="1.3" fill="#787878"/><rect x="1.2" y="17.4" width="16" height="2.6" rx="1.3" fill="#787878"/><rect x="2.5" y="10" width="19" height="2.4" fill="#fff"/><rect x="2.5" y="15" width="17" height="2.4" fill="#fff"/><rect x="0" y="10" width="4.9" height="2.4" fill="#fff"/><rect x="0" y="15" width="4.9" height="2.4" fill="#fff"/><path d="M30.5 10.5 H34.6 L40.6 17.6 H30.5 Z" fill="#fff"/><circle cx="12.4" cy="29.7" r="3.3" fill="#fff"/><circle cx="35" cy="29.7" r="3.3" fill="#fff"/></svg>
<div class="c b e" style="left:65.2px;top:662.2px">Ford ...</div>
<div class="c" style="left:122.6px;top:662.2px"><b style="letter-spacing:.48px">2019.12.18</b> 08...</div>
<div class="c" style="left:243.2px;top:662.2px">1</div>
<div class="c" style="left:363.2px;top:662.2px">28</div>
<div class="c" style="left:486.6px;top:662.2px">58.31</div>
<div class="abs" style="left:602.4px;top:658.6px;width:4.4px;height:18px;background:#d3ecc9"></div>
<div class="c g" style="left:605.6px;top:662.2px">29.00</div>
<div class="abs" style="left:722.6px;top:658.6px;width:6.4px;height:18px;background:#d3ecc9"></div>
<div class="c g" style="left:725.6px;top:662.2px">2.80 m³</div>
<div class="abs" style="left:821px;top:8px;width:1338px;height:660px;background:#e2e2e2"></div>
<div class="abs" style="left:821px;top:8px;width:12px;height:874px;background:#e2e2e2"></div>
<svg class="abs" style="left:824px;top:606px" width="7" height="11" viewBox="0 0 7 11"><path d="M6.4 0 V11 L0.4 5.5 Z" fill="#111"/></svg>
<div class="badge" style="left:839px;width:44px;background:#999999"><span>28</span></div>
<div class="badge" style="left:886px;width:43.5px;background:#68c357"><span>0</span></div>
<div class="badge" style="left:932px;width:45px;background:#e5593f"><span>28</span></div>
<div class="badge" style="left:979px;width:45px;background:#f6bd4f"><span>0</span></div>
<svg style="position:absolute;left:1557px;top:34px" width="20" height="19" viewBox="0 0 20 19" ><ellipse cx="12" cy="8.6" rx="6.6" ry="2.6" fill="#959595"/><ellipse cx="12" cy="7.0" rx="6.6" ry="2.6" fill="#959595" stroke="#e2e2e2" stroke-width="0.9"/><ellipse cx="12" cy="5.0" rx="6.6" ry="2.6" fill="#959595"/><ellipse cx="12" cy="3.4" rx="6.6" ry="2.6" fill="#959595" stroke="#e2e2e2" stroke-width="0.9"/><ellipse cx="7.4" cy="17.400000000000002" rx="7" ry="2.6" fill="#959595"/><ellipse cx="7.4" cy="15.8" rx="7" ry="2.6" fill="#959595" stroke="#e2e2e2" stroke-width="0.9"/><ellipse cx="7.4" cy="13.799999999999999" rx="7" ry="2.6" fill="#959595"/><ellipse cx="7.4" cy="12.2" rx="7" ry="2.6" fill="#959595" stroke="#e2e2e2" stroke-width="0.9"/><ellipse cx="7.4" cy="10.2" rx="7" ry="2.6" fill="#959595"/><ellipse cx="7.4" cy="8.6" rx="7" ry="2.6" fill="#959595" stroke="#e2e2e2" stroke-width="0.9"/></svg>
<div class="c" style="left:1580px;top:33.6px;font-size:15.6px;color:#222">0.00 ₽</div>
<svg style="position:absolute;left:1667.6px;top:34.6px" width="17.2" height="18.2" viewBox="0 0 17 18" ><circle cx="8.5" cy="4.6" r="4.6" fill="#959595"/><path d="M0 18 V15 a4.6 4.6 0 0 1 4.6 -4.6 H12.4 a4.6 4.6 0 0 1 4.6 4.6 V18 Z" fill="#959595"/></svg>
<div class="c" style="left:1689.6px;top:33.4px;font-size:16.1px;color:#222">Для логистики(master)</div>
<svg style="position:absolute;left:1912px;top:27px" width="29.6" height="32" viewBox="0 0 30 32" ><path d="M18.6 0.2 A16 16 0 1 0 29.4 25.6 A14 14 0 0 1 18.6 0.2 Z" fill="#959595"/></svg>
<svg style="position:absolute;left:1962.2px;top:27px" width="32" height="31.6" viewBox="0 0 32 32" ><circle cx="16" cy="16" r="15.8" fill="#959595"/><path d="M12 3.4 L17.4 3 L16.4 6 L18.4 7.4 L16.6 9 L17.2 11.4 L14.4 12.6 L15.2 15 L12.4 15.6 L11 14.2 L9.4 15.4 L6.4 13.2 L4.4 14 C4.2 10 7 5.6 12 3.4 Z" fill="#e2e2e2"/><path d="M12.6 17 L18.6 17.6 L22.4 20.2 L20.4 24 L18.4 28 L16.2 28.4 L15 23.6 L12.4 20.4 Z" fill="#e2e2e2"/><path d="M28.4 10.8 C29.6 13.6 29.6 17 28.6 19.6 L25.2 16.4 L26.2 12 Z" fill="#e2e2e2"/></svg>
<svg style="position:absolute;left:2013.4px;top:26.8px" width="32.6" height="32.3" viewBox="0 0 32.6 32.3" ><path d="M4.6 27.8 L21 11.2" stroke="#959595" stroke-width="9.2" stroke-linecap="round" fill="none"/><circle cx="23.4" cy="8.8" r="8.8" fill="#959595"/><circle cx="25.8" cy="6.6" r="4.5" fill="#e2e2e2"/><path d="M22.4 3.6 L27.2 -2 L34 5 L28.8 10 Z" fill="#e2e2e2"/><circle cx="4.3" cy="28.1" r="1.6" fill="#e2e2e2"/><path d="M10 9 L19.4 18.8" stroke="#e2e2e2" stroke-width="6.4" fill="none"/><path d="M19.4 19.2 L27.8 27.6" stroke="#e2e2e2" stroke-width="12.4" stroke-linecap="round" fill="none"/><path d="M4 0.3 L12.3 6.2 V9.6 L9.6 12 L6.2 11.6 L0.5 3.9 Z" fill="#959595" stroke="#959595" stroke-width="0.8" stroke-linejoin="round"/><path d="M10.6 9.8 L19.4 18.8" stroke="#959595" stroke-width="3.2" fill="none"/><path d="M19.8 19.6 L27.6 27.4" stroke="#959595" stroke-width="9.6" stroke-linecap="round" fill="none"/></svg>
<svg style="position:absolute;left:2067.2px;top:27px" width="28" height="32" viewBox="0 0 28 32" ><circle cx="14" cy="11.4" r="7.6" fill="#959595"/><path d="M2.6 13 A11.6 11.6 0 0 1 25.4 11 V13.6 A5.6 5.6 0 0 1 20 18.8 H14" fill="none" stroke="#959595" stroke-width="1.7"/><ellipse cx="13.8" cy="18.6" rx="3.4" ry="2.1" fill="#959595" stroke="#e2e2e2" stroke-width="1.2"/><path d="M0.4 32 V28 a6 6 0 0 1 6 -6 H21.6 a6 6 0 0 1 6 6 V32 Z" fill="#959595"/></svg>
<svg style="position:absolute;left:2116.8px;top:27px" width="31.6" height="31.6" viewBox="0 0 32 32" ><path d="M8.6 6.6 A13 13 0 1 0 23.4 6.6" fill="none" stroke="#959595" stroke-width="4.6" stroke-linecap="round"/><rect x="13.8" y="0" width="4.4" height="17" rx="1" fill="#959595"/></svg>
<div class="abs" style="left:833px;top:75px;width:656.6px;height:541px;background:#eeeeee"></div>
<svg style="position:absolute;left:847px;top:92.2px" width="22.6" height="18.8" viewBox="0 0 23 19" ><rect x="0" y="0" width="23" height="19" rx="2" fill="#07507a"/><rect x="3" y="6.4" width="7" height="3.6" fill="#eeeeee"/><rect x="12.6" y="6.4" width="7.4" height="3.6" fill="#eeeeee"/><rect x="3" y="12.4" width="7" height="3.8" fill="#eeeeee"/><rect x="12.6" y="12.4" width="7.4" height="3.8" fill="#eeeeee"/></svg>
<div class="inp" style="left:880.6px;top:83.8px;width:139.6px;height:35.4px"></div>
<svg style="position:absolute;left:886.8px;top:90px" width="19.2" height="19.6" viewBox="0 0 19 19.6" ><path d="M0.8 0 H18.2 a0.8 0.8 0 0 1 0.6 1.4 L11.8 9 V19.4 L7.2 16 V9 L0.2 1.4 A0.8 0.8 0 0 1 0.8 0 Z" fill="#9a9a9a"/></svg>
<svg style="position:absolute;left:994px;top:93px" width="14.2" height="14.2" viewBox="0 0 14 14" ><path d="M2 2 L12 12 M12 2 L2 12" stroke="#949494" stroke-width="3.6" stroke-linecap="round" fill="none"/></svg>
<div class="inp" style="left:1024.6px;top:83.8px;width:139.6px;height:35.4px"></div><div class="c" style="left:1031.2px;top:91.9px;font-size:15.5px">01.06.2019</div>
<div class="inp" style="left:1184.4px;top:83.8px;width:139.8px;height:35.4px"></div><div class="c" style="left:1191px;top:91.9px;font-size:15.5px">14.08.2024</div>
<svg style="position:absolute;left:1136.4px;top:92px" width="17.4" height="19" viewBox="0 0 17 19" ><rect x="0" y="2.4" width="17" height="16.6" rx="1.6" fill="#8a8a8a"/><rect x="3.2" y="0" width="2.4" height="4.6" rx="0.6" fill="#8a8a8a"/><rect x="11.4" y="0" width="2.4" height="4.6" rx="0.6" fill="#8a8a8a"/><rect x="0" y="6.2" width="17" height="1.2" fill="#fff"/><rect x="2.4" y="9.4" width="3" height="2.8" fill="#fff"/><rect x="6.9" y="9.4" width="3" height="2.8" fill="#fff"/><rect x="11.4" y="9.4" width="3" height="2.8" fill="#fff"/><rect x="2.4" y="13.8" width="3" height="2.8" fill="#fff"/><rect x="6.9" y="13.8" width="3" height="2.8" fill="#fff"/><rect x="11.4" y="13.8" width="3" height="2.8" fill="#fff"/></svg>
<svg style="position:absolute;left:1296px;top:92px" width="17.4" height="19" viewBox="0 0 17 19" ><rect x="0" y="2.4" width="17" height="16.6" rx="1.6" fill="#8a8a8a"/><rect x="3.2" y="0" width="2.4" height="4.6" rx="0.6" fill="#8a8a8a"/><rect x="11.4" y="0" width="2.4" height="4.6" rx="0.6" fill="#8a8a8a"/><rect x="0" y="6.2" width="17" height="1.2" fill="#fff"/><rect x="2.4" y="9.4" width="3" height="2.8" fill="#fff"/><rect x="6.9" y="9.4" width="3" height="2.8" fill="#fff"/><rect x="11.4" y="9.4" width="3" height="2.8" fill="#fff"/><rect x="2.4" y="13.8" width="3" height="2.8" fill="#fff"/><rect x="6.9" y="13.8" width="3" height="2.8" fill="#fff"/><rect x="11.4" y="13.8" width="3" height="2.8" fill="#fff"/></svg>
<div class="c" style="left:1172.6px;top:88px;font-size:14px">-</div>
<svg style="position:absolute;left:1337px;top:91px" width="19.4" height="21.6" viewBox="0 0 20 22" ><rect x="0" y="2.6" width="20" height="19.4" rx="2" fill="#07507a"/><rect x="3.8" y="0" width="2.8" height="5" rx="0.7" fill="#07507a"/><rect x="13.4" y="0" width="2.8" height="5" rx="0.7" fill="#07507a"/><rect x="0" y="7" width="20" height="1.6" fill="#eeeeee"/><rect x="3" y="11.4" width="6" height="5.6" rx="0.6" fill="#eeeeee"/></svg>
<svg style="position:absolute;left:1378px;top:91px" width="19.4" height="21.6" viewBox="0 0 20 22" ><rect x="0" y="2.6" width="20" height="19.4" rx="2" fill="#07507a"/><rect x="3.8" y="0" width="2.8" height="5" rx="0.7" fill="#07507a"/><rect x="13.4" y="0" width="2.8" height="5" rx="0.7" fill="#07507a"/><rect x="0" y="7" width="20" height="1.6" fill="#eeeeee"/><rect x="3" y="11.4" width="6" height="5.6" rx="0.6" fill="#eeeeee"/></svg>
<svg style="position:absolute;left:1418.2px;top:91.8px" width="19.8" height="19.6" viewBox="0 0 20 20" ><rect x="7.9" y="0" width="4.2" height="20" rx="1.3" fill="#07507a"/><rect x="0" y="7.9" width="20" height="4.2" rx="1.3" fill="#07507a"/></svg>
<svg style="position:absolute;left:1459px;top:89.8px" width="20" height="22" viewBox="0 0 19.8 21.9" ><path d="M2.2 0.2 L0.2 8.8 L8.6 9.9 L7.7 8.1 Q11.6 4.8 15.8 7.6 Q18 9.2 19.4 11.4 Q19.9 4.4 13.4 1.5 Q8.4 -0.2 3.9 3 Z" fill="#07507a"/><path d="M2.2 0.2 L0.2 8.8 L8.6 9.9 L7.7 8.1 Q11.6 4.8 15.8 7.6 Q18 9.2 19.4 11.4 Q19.9 4.4 13.4 1.5 Q8.4 -0.2 3.9 3 Z" fill="#07507a" transform="rotate(180 9.9 10.95)"/></svg>
<div class="abs" style="left:833px;top:128.6px;width:656.6px;height:39px;background:#fff;border-bottom:1.4px solid #d9d9d9"></div>
<div class="vl" style="left:871.2px;top:129px;height:38px"></div>
<div class="vl" style="left:919.4px;top:129px;height:38px"></div>
<div class="vl" style="left:983.2px;top:129px;height:38px"></div>
<div class="vl" style="left:1048.2px;top:129px;height:38px"></div>
<div class="vl" style="left:1111.2px;top:129px;height:38px"></div>
<div class="vl" style="left:1176.2px;top:129px;height:38px"></div>
<div class="vl" style="left:1240.4px;top:129px;height:38px"></div>
<div class="vl" style="left:1304.4px;top:129px;height:38px"></div>
<div class="vl" style="left:1369.4px;top:129px;height:38px"></div>
<div class="vl" style="left:1417.6px;top:129px;height:38px"></div>
<div class="cb" style="left:844px;top:139px;border-width:2px"></div>
<div class="hd" style="left:877.4px;top:137.4px;width:30px">#</div>
<div class="hd" style="left:925.4px;top:137.4px;width:57.4px">Customer</div>
<div class="hd" style="left:988.6px;top:128.2px;width:58px">Start<br>Address</div>
<div class="hd" style="left:1053.6px;top:128.2px;width:57px">Stop<br>Address</div>
<div class="hd" style="left:1116.6px;top:137.4px;width:58px">Branch</div>
<div class="hd" style="left:1181.6px;top:137.4px;width:58.4px">Warehouse</div>
<div class="hd" style="left:1245.6px;top:137.4px;width:58px">District</div>
<div class="hd" style="left:1310px;top:137.4px;width:58px">Group</div>
<svg style="position:absolute;left:1375px;top:137.4px" width="19" height="18.6" viewBox="0 0 19 18.6" ><path d="M2 3.4 H17 a2 2 0 0 1 2 2 V16.6 a2 2 0 0 1 -2 2 H2 a2 2 0 0 1 -2 -2 V5.4 a2 2 0 0 1 2 -2 Z" fill="#07507a"/><circle cx="9.5" cy="6.2" r="6.8" fill="#fff"/><circle cx="9.5" cy="6.2" r="5.6" fill="#07507a"/><path d="M11.2 2.6 L9.2 8.2" stroke="#fff" stroke-width="1.7" stroke-linecap="round"/><circle cx="9.1" cy="8.3" r="1.3" fill="#fff"/></svg>
<svg style="position:absolute;left:1423px;top:138px" width="24" height="18" viewBox="0 0 24 18" ><g transform="rotate(-27 12 9)"><rect x="-0.6" y="5.4" width="25.2" height="7.4" rx="0.6" fill="#07507a"/><rect x="3.2" y="5.4" width="1.2" height="3.4" fill="#fff"/><rect x="7.4" y="5.4" width="1.2" height="2.4" fill="#fff"/><rect x="11.600000000000001" y="5.4" width="1.2" height="3.4" fill="#fff"/><rect x="15.8" y="5.4" width="1.2" height="2.4" fill="#fff"/><rect x="20.0" y="5.4" width="1.2" height="3.4" fill="#fff"/></g></svg>
<div class="abs" style="left:833px;top:168px;width:631.6px;height:407px;background:#fff;overflow:hidden" id="ob">
<svg style="position:absolute;left:6px;top:9px" width="15" height="15" viewBox="0 0 15 15" ><rect x="0" y="0" width="15" height="15" rx="2" fill="#8f8f8f"/><rect x="3" y="6" width="9" height="3" fill="#fff"/></svg>
<div class="cbs" style="left:39.60000000000002px;top:10px;border-radius:3.5px"></div>
<div class="c" style="left:62.60000000000002px;top:10.400000000000006px;color:#066ea5;font-size:16px;-webkit-text-stroke:.25px #066ea5">2019.10.29</div>
<div class="hl" style="left:0;top:32px;width:640px;background:#e2e2e2"></div>
<div class="hl" style="left:0;top:65.2px;width:640px"></div>
<div class="cb" style="left:13.799999999999955px;top:37.0px;width:16.6px;height:16.2px;border-width:1.7px;border-radius:2px"></div>
<div class="c" style="left:40.60000000000002px;top:38.8px">413...</div>
<div class="c b e" style="left:88.79999999999995px;top:38.8px">Client ...</div>
<div class="c" style="left:153px;top:38.8px">г. Мос...</div>
<div class="c" style="left:217.4000000000001px;top:38.8px">г. Мос...</div>
<div class="c b e" style="left:281px;top:38.8px">Для л...</div>
<div class="c b e" style="left:345.4000000000001px;top:38.8px">г. Мос...</div>
<div class="c" style="left:539.4000000000001px;top:38.8px">1 kg</div>
<div class="c" style="left:586.5999999999999px;top:38.8px">0.00...</div>
<div class="hl" style="left:0;top:98.5px;width:640px"></div>
<div class="cb" style="left:13.799999999999955px;top:70.4px;width:16.6px;height:16.2px;border-width:1.7px;border-radius:2px"></div>
<div class="c" style="left:40.60000000000002px;top:72.2px">413...</div>
<div class="c b e" style="left:88.79999999999995px;top:72.2px">Client ...</div>
<div class="c" style="left:153px;top:72.2px">г. Мос...</div>
<div class="c" style="left:217.4000000000001px;top:72.2px">г. Мос...</div>
<div class="c b e" style="left:281px;top:72.2px">Для л...</div>
<div class="c b e" style="left:345.4000000000001px;top:72.2px">г. Мос...</div>
<div class="c" style="left:539.4000000000001px;top:72.2px">1 kg</div>
<div class="c" style="left:586.5999999999999px;top:72.2px">0.00...</div>
<div class="hl" style="left:0;top:131.9px;width:640px"></div>
<div class="cb" style="left:13.799999999999955px;top:103.7px;width:16.6px;height:16.2px;border-width:1.7px;border-radius:2px"></div>
<div class="c" style="left:40.60000000000002px;top:105.5px">413...</div>
<div class="c b e" style="left:88.79999999999995px;top:105.5px">Client ...</div>
<div class="c" style="left:153px;top:105.5px">г. Мос...</div>
<div class="c" style="left:217.4000000000001px;top:105.5px">г. Мос...</div>
<div class="c b e" style="left:281px;top:105.5px">Для л...</div>
<div class="c b e" style="left:345.4000000000001px;top:105.5px">г. Мос...</div>
<div class="c" style="left:539.4000000000001px;top:105.5px">1 kg</div>
<div class="c" style="left:586.5999999999999px;top:105.5px">0.00...</div>
<div class="hl" style="left:0;top:165.2px;width:640px"></div>
<div class="cb" style="left:13.799999999999955px;top:137.1px;width:16.6px;height:16.2px;border-width:1.7px;border-radius:2px"></div>
<div class="c" style="left:40.60000000000002px;top:138.9px">413...</div>
<div class="abs" style="left:86.20000000000005px;top:133.3px;width:63.6px;height:31.4px;background:#cbfca2"></div>
<div class="c b e" style="left:88.79999999999995px;top:138.9px;color:#169274">Client ...</div>
<div class="c" style="left:153px;top:138.9px">г. Мос...</div>
<div class="c" style="left:217.4000000000001px;top:138.9px">г. Мос...</div>
<div class="c b e" style="left:281px;top:138.9px">Для л...</div>
<div class="c b e" style="left:345.4000000000001px;top:138.9px">г. Мос...</div>
<div class="c" style="left:539.4000000000001px;top:138.9px">73 kg</div>
<div class="c" style="left:586.5999999999999px;top:138.9px">5.00...</div>
<div class="hl" style="left:0;top:198.6px;width:640px"></div>
<div class="cb" style="left:13.799999999999955px;top:170.4px;width:16.6px;height:16.2px;border-width:1.7px;border-radius:2px"></div>
<div class="c" style="left:40.60000000000002px;top:172.2px">413...</div>
<div class="abs" style="left:86.20000000000005px;top:166.6px;width:63.6px;height:31.4px;background:#cbfca2"></div>
<div class="c b e" style="left:88.79999999999995px;top:172.2px;color:#169274">Client ...</div>
<div class="c" style="left:153px;top:172.2px">г. Мос...</div>
<div class="c" style="left:217.4000000000001px;top:172.2px">г. Мос...</div>
<div class="c b e" style="left:281px;top:172.2px">Для л...</div>
<div class="c b e" style="left:345.4000000000001px;top:172.2px">г. Мос...</div>
<div class="c" style="left:539.4000000000001px;top:172.2px">31 kg</div>
<div class="c" style="left:586.5999999999999px;top:172.2px">2.00...</div>
<div class="hl" style="left:0;top:232.0px;width:640px"></div>
<div class="cb" style="left:13.799999999999955px;top:203.8px;width:16.6px;height:16.2px;border-width:1.7px;border-radius:2px"></div>
<div class="c" style="left:40.60000000000002px;top:205.6px">413...</div>
<div class="abs" style="left:86.20000000000005px;top:200.0px;width:63.6px;height:31.4px;background:#cbfca2"></div>
<div class="c b e" style="left:88.79999999999995px;top:205.6px;color:#169274">Client ...</div>
<div class="c" style="left:153px;top:205.6px">г. Мос...</div>
<div class="c" style="left:217.4000000000001px;top:205.6px">г. Мос...</div>
<div class="c b e" style="left:281px;top:205.6px">Для л...</div>
<div class="c b e" style="left:345.4000000000001px;top:205.6px">г. Мос...</div>
<div class="c" style="left:539.4000000000001px;top:205.6px">352 ...</div>
<div class="c" style="left:586.5999999999999px;top:205.6px">0.02...</div>
<div class="hl" style="left:0;top:265.3px;width:640px"></div>
<div class="cb" style="left:13.799999999999955px;top:237.2px;width:16.6px;height:16.2px;border-width:1.7px;border-radius:2px"></div>
<div class="c" style="left:40.60000000000002px;top:239.0px">413...</div>
<div class="abs" style="left:86.20000000000005px;top:233.4px;width:63.6px;height:31.4px;background:#cbfca2"></div>
<div class="c b e" style="left:88.79999999999995px;top:239.0px;color:#169274">Client ...</div>
<div class="c" style="left:153px;top:239.0px">г. Мос...</div>
<div class="c" style="left:217.4000000000001px;top:239.0px">г. Мос...</div>
<div class="c b e" style="left:281px;top:239.0px">Для л...</div>
<div class="c b e" style="left:345.4000000000001px;top:239.0px">г. Мос...</div>
<div class="c" style="left:539.4000000000001px;top:239.0px">143 ...</div>
<div class="c" style="left:586.5999999999999px;top:239.0px">0.01...</div>
<div class="hl" style="left:0;top:298.7px;width:640px"></div>
<div class="cb" style="left:13.799999999999955px;top:270.5px;width:16.6px;height:16.2px;border-width:1.7px;border-radius:2px"></div>
<div class="c" style="left:40.60000000000002px;top:272.3px">413...</div>
<div class="abs" style="left:86.20000000000005px;top:266.7px;width:63.6px;height:31.4px;background:#cbfca2"></div>
<div class="c b e" style="left:88.79999999999995px;top:272.3px;color:#169274">Client ...</div>
<div class="c" style="left:153px;top:272.3px">г. Мос...</div>
<div class="c" style="left:217.4000000000001px;top:272.3px">г. Мос...</div>
<div class="c b e" style="left:281px;top:272.3px">Для л...</div>
<div class="c b e" style="left:345.4000000000001px;top:272.3px">г. Мос...</div>
<div class="c" style="left:539.4000000000001px;top:272.3px">0 kg</div>
<div class="c" style="left:586.5999999999999px;top:272.3px">1.00...</div>
<div class="hl" style="left:0;top:332.0px;width:640px"></div>
<div class="cb" style="left:13.799999999999955px;top:303.9px;width:16.6px;height:16.2px;border-width:1.7px;border-radius:2px"></div>
<div class="c" style="left:40.60000000000002px;top:305.7px">413...</div>
<div class="abs" style="left:86.20000000000005px;top:300.1px;width:63.6px;height:31.4px;background:#cbfca2"></div>
<div class="c b e" style="left:88.79999999999995px;top:305.7px;color:#169274">Client ...</div>
<div class="c" style="left:153px;top:305.7px">г. Мос...</div>
<div class="c" style="left:217.4000000000001px;top:305.7px">г. Мос...</div>
<div class="c b e" style="left:281px;top:305.7px">Для л...</div>
<div class="c b e" style="left:345.4000000000001px;top:305.7px">г. Мос...</div>
<div class="c" style="left:539.4000000000001px;top:305.7px">710 ...</div>
<div class="c" style="left:586.5999999999999px;top:305.7px">0.04...</div>
<div class="hl" style="left:0;top:365.4px;width:640px"></div>
<div class="cb" style="left:13.799999999999955px;top:337.2px;width:16.6px;height:16.2px;border-width:1.7px;border-radius:2px"></div>
<div class="c" style="left:40.60000000000002px;top:339.0px">413...</div>
<div class="abs" style="left:86.20000000000005px;top:333.4px;width:63.6px;height:31.4px;background:#cbfca2"></div>
<div class="c b e" style="left:88.79999999999995px;top:339.0px;color:#169274">Client ...</div>
<div class="c" style="left:153px;top:339.0px">г. Мос...</div>
<div class="c" style="left:217.4000000000001px;top:339.0px">г. Мос...</div>
<div class="c b e" style="left:281px;top:339.0px">Для л...</div>
<div class="c b e" style="left:345.4000000000001px;top:339.0px">г. Мос...</div>
<div class="c" style="left:539.4000000000001px;top:339.0px">352 ...</div>
<div class="c" style="left:586.5999999999999px;top:339.0px">0.02...</div>
<div class="hl" style="left:0;top:398.8px;width:640px"></div>
<div class="cb" style="left:13.799999999999955px;top:370.6px;width:16.6px;height:16.2px;border-width:1.7px;border-radius:2px"></div>
<div class="c" style="left:40.60000000000002px;top:372.4px">413...</div>
<div class="abs" style="left:86.20000000000005px;top:366.8px;width:63.6px;height:31.4px;background:#cbfca2"></div>
<div class="c b e" style="left:88.79999999999995px;top:372.4px;color:#169274">Client ...</div>
<div class="c" style="left:153px;top:372.4px">г. Мос...</div>
<div class="c" style="left:217.4000000000001px;top:372.4px">г. Мос...</div>
<div class="c b e" style="left:281px;top:372.4px">Для л...</div>
<div class="c b e" style="left:345.4000000000001px;top:372.4px">г. Мос...</div>
<div class="c" style="left:539.4000000000001px;top:372.4px">76 kg</div>
<div class="c" style="left:586.5999999999999px;top:372.4px">4.00...</div>
<div class="hl" style="left:0;top:432.1px;width:640px"></div>
<div class="cb" style="left:13.799999999999955px;top:404.0px;width:16.6px;height:16.2px;border-width:1.7px;border-radius:2px"></div>
<div class="c" style="left:40.60000000000002px;top:405.8px">413...</div>
<div class="abs" style="left:86.20000000000005px;top:400.2px;width:63.6px;height:31.4px;background:#cbfca2"></div>
<div class="c b e" style="left:88.79999999999995px;top:405.8px;color:#169274">Client ...</div>
<div class="c" style="left:153px;top:405.8px">г. Мос...</div>
<div class="c" style="left:217.4000000000001px;top:405.8px">г. Мос...</div>
<div class="c b e" style="left:281px;top:405.8px">Для л...</div>
<div class="c b e" style="left:345.4000000000001px;top:405.8px">г. Мос...</div>
<div class="c" style="left:539.4000000000001px;top:405.8px"></div>
<div class="c" style="left:586.5999999999999px;top:405.8px"></div>
</div>
<div class="abs" style="left:1464.4px;top:168px;width:25.2px;height:407px;background:#f1f1f1"></div>
<div class="abs" style="left:1466.2px;top:192px;width:20.6px;height:113px;background:#c1c1c1"></div>
<svg class="abs" style="left:1471.0px;top:177px" width="12" height="7" viewBox="0 0 12 7"><path d="M0 6.6 H12 L6 0.4 Z" fill="#a3a3a3"/></svg>
<svg class="abs" style="left:1471.0px;top:560px" width="12" height="7" viewBox="0 0 12 7"><path d="M0 0.4 H12 L6 6.6 Z" fill="#505050"/></svg>
<div class="abs" style="left:1502.4px;top:75px;width:657px;height:541px;background:#eeeeee"></div>
<div class="inp" style="left:1509px;top:83.8px;width:159.8px;height:35.4px"></div>
<svg style="position:absolute;left:1515.4px;top:90.6px" width="19" height="19" viewBox="0 0 19 19" ><circle cx="7.6" cy="7.6" r="5.8" fill="none" stroke="#9a9a9a" stroke-width="2.8"/><path d="M12 12 L17.6 17.6" stroke="#9a9a9a" stroke-width="3.2" stroke-linecap="round"/></svg>
<svg style="position:absolute;left:1643px;top:93px" width="14.2" height="14.2" viewBox="0 0 14 14" ><path d="M2 2 L12 12 M12 2 L2 12" stroke="#949494" stroke-width="3.6" stroke-linecap="round" fill="none"/></svg>
<div class="inp" style="left:1674px;top:83.8px;width:159.4px;height:35.4px"></div>
<svg style="position:absolute;left:1680px;top:90px" width="19.2" height="19.6" viewBox="0 0 19 19.6" ><path d="M0.8 0 H18.2 a0.8 0.8 0 0 1 0.6 1.4 L11.8 9 V19.4 L7.2 16 V9 L0.2 1.4 A0.8 0.8 0 0 1 0.8 0 Z" fill="#9a9a9a"/></svg>
<svg style="position:absolute;left:1806px;top:93px" width="14.2" height="14.2" viewBox="0 0 14 14" ><path d="M2 2 L12 12 M12 2 L2 12" stroke="#949494" stroke-width="3.6" stroke-linecap="round" fill="none"/></svg>
<div class="c" style="left:1838.6px;top:88px;font-size:14px;transform:translateY(.9px) scaleY(1.03);color:#222">600 kg</div>
<div class="abs" style="left:1895px;top:96.4px;width:120px;height:2.8px;background:#e0e0e0"></div>
<div class="abs" style="left:1884px;top:86.6px;width:22px;height:22px;border-radius:50%;background:#066ea5"></div>
<div class="abs" style="left:2004.6px;top:86.6px;width:22px;height:22px;border-radius:50%;background:#066ea5"></div>
<div class="c" style="left:2029.6px;top:88px;font-size:14px;transform:translateY(.9px) scaleY(1.03);color:#222">9.26 tn</div>
<svg style="position:absolute;left:2088.4px;top:89.4px" width="19.8" height="21.8" viewBox="0 0 19.8 21.9" ><path d="M2.2 0.2 L0.2 8.8 L8.6 9.9 L7.7 8.1 Q11.6 4.8 15.8 7.6 Q18 9.2 19.4 11.4 Q19.9 4.4 13.4 1.5 Q8.4 -0.2 3.9 3 Z" fill="#07507a"/><path d="M2.2 0.2 L0.2 8.8 L8.6 9.9 L7.7 8.1 Q11.6 4.8 15.8 7.6 Q18 9.2 19.4 11.4 Q19.9 4.4 13.4 1.5 Q8.4 -0.2 3.9 3 Z" fill="#07507a" transform="rotate(180 9.9 10.95)"/></svg>
<svg style="position:absolute;left:2127.6px;top:90px" width="22" height="22" viewBox="0 0 22 22" ><path d="M3.4 3 L19 5.2 L17.4 17.6 L4.4 19 Z" fill="none" stroke="#6a6a6a" stroke-width="1.2"/><circle cx="3.4" cy="3" r="1.8" fill="#eeeeee" stroke="#6a6a6a" stroke-width="0.96"/><circle cx="19" cy="5.2" r="1.8" fill="#eeeeee" stroke="#6a6a6a" stroke-width="0.96"/><circle cx="17.4" cy="17.6" r="1.8" fill="#eeeeee" stroke="#6a6a6a" stroke-width="0.96"/><circle cx="4.4" cy="19" r="1.8" fill="#eeeeee" stroke="#6a6a6a" stroke-width="0.96"/></svg>
<div class="abs" style="left:1502.4px;top:128.6px;width:657px;height:21.8px;background:#fff;border-bottom:1.4px solid #d9d9d9"></div>
<div class="vl" style="left:1541px;top:129px;height:21px"></div>
<div class="vl" style="left:1739.4px;top:129px;height:21px"></div>
<div class="vl" style="left:1937.4px;top:129px;height:21px"></div>
<div class="vl" style="left:2003.4px;top:129px;height:21px"></div>
<div class="vl" style="left:2069px;top:129px;height:21px"></div>
<div class="cb" style="left:1514px;top:130.6px;border-width:2px"></div>
<div class="hd" style="left:1546.6px;top:128.9px">Vehicles</div>
<div class="hd" style="left:1744.8px;top:128.9px">Branch</div>
<div class="hd" style="left:2074.6px;top:128.9px">Zones</div>
<svg style="position:absolute;left:1942.6px;top:128.4px" width="19" height="18.6" viewBox="0 0 19 18.6" ><path d="M2 3.4 H17 a2 2 0 0 1 2 2 V16.6 a2 2 0 0 1 -2 2 H2 a2 2 0 0 1 -2 -2 V5.4 a2 2 0 0 1 2 -2 Z" fill="#07507a"/><circle cx="9.5" cy="6.2" r="6.8" fill="#fff"/><circle cx="9.5" cy="6.2" r="5.6" fill="#07507a"/><path d="M11.2 2.6 L9.2 8.2" stroke="#fff" stroke-width="1.7" stroke-linecap="round"/><circle cx="9.1" cy="8.3" r="1.3" fill="#fff"/></svg>
<svg style="position:absolute;left:2008.6px;top:128.8px" width="24" height="18" viewBox="0 0 24 18" ><g transform="rotate(-27 12 9)"><rect x="-0.6" y="5.4" width="25.2" height="7.4" rx="0.6" fill="#07507a"/><rect x="3.2" y="5.4" width="1.2" height="3.4" fill="#fff"/><rect x="7.4" y="5.4" width="1.2" height="2.4" fill="#fff"/><rect x="11.600000000000001" y="5.4" width="1.2" height="3.4" fill="#fff"/><rect x="15.8" y="5.4" width="1.2" height="2.4" fill="#fff"/><rect x="20.0" y="5.4" width="1.2" height="3.4" fill="#fff"/></g></svg>
<div class="abs" style="left:1502.4px;top:151px;width:633px;height:424px;background:#fff;overflow:hidden">
<svg style="position:absolute;left:7.199999999999818px;top:9px" width="15" height="15" viewBox="0 0 15 15" ><rect x="0" y="0" width="15" height="15" rx="2" fill="#8f8f8f"/><rect x="3" y="6" width="9" height="3" fill="#fff"/></svg>
<div class="cbs" style="left:41.399999999999864px;top:10px;border-radius:3.5px"></div>
<div class="c" style="left:64.0px;top:9.400000000000006px;color:#066ea5;font-size:16.2px;-webkit-text-stroke:.25px #066ea5">Для логистики</div>
<div class="hl" style="left:0;top:32.19999999999999px;width:640px;background:#e2e2e2"></div>
<div class="hl" style="left:0;top:65.4px;width:640px"></div>
<div class="cb" style="left:15.199999999999818px;top:37.0px;width:16.4px;height:16px;border-width:1.7px;border-radius:2px"></div>
<div class="c b" style="left:42.0px;top:39.2px">isuzu 18</div>
<div class="c b" style="left:240.19999999999982px;top:39.2px">Для логистики</div>
<div class="c" style="left:437.79999999999995px;top:39.2px">9.26 tn</div>
<div class="c" style="left:504.0px;top:39.2px">25.00 ...</div>
<div class="hl" style="left:0;top:98.7px;width:640px"></div>
<div class="cb" style="left:15.199999999999818px;top:70.4px;width:16.4px;height:16px;border-width:1.7px;border-radius:2px"></div>
<div class="c b" style="left:42.0px;top:72.6px">isuzu 12</div>
<div class="c b" style="left:240.19999999999982px;top:72.6px">Для логистики</div>
<div class="c" style="left:437.79999999999995px;top:72.6px">7.00 tn</div>
<div class="c" style="left:504.0px;top:72.6px">15.00 ...</div>
<div class="hl" style="left:0;top:132.1px;width:640px"></div>
<div class="cb" style="left:15.199999999999818px;top:103.7px;width:16.4px;height:16px;border-width:1.7px;border-radius:2px"></div>
<div class="c b" style="left:42.0px;top:105.9px">isuzu 9</div>
<div class="c b" style="left:240.19999999999982px;top:105.9px">Для логистики</div>
<div class="c" style="left:437.79999999999995px;top:105.9px">5.00 tn</div>
<div class="c" style="left:504.0px;top:105.9px">20.00 ...</div>
<div class="hl" style="left:0;top:165.4px;width:640px"></div>
<div class="cb" style="left:15.199999999999818px;top:137.1px;width:16.4px;height:16px;border-width:1.7px;border-radius:2px"></div>
<div class="c b" style="left:42.0px;top:139.3px">Ford Transit 12</div>
<div class="c b" style="left:240.19999999999982px;top:139.3px">Для логистики</div>
<div class="c" style="left:437.79999999999995px;top:139.3px">2.00 tn</div>
<div class="c" style="left:504.0px;top:139.3px">4.00 m³</div>
<div class="hl" style="left:0;top:198.8px;width:640px"></div>
<div class="cb" style="left:15.199999999999818px;top:170.4px;width:16.4px;height:16px;border-width:1.7px;border-radius:2px"></div>
<div class="c b" style="left:42.0px;top:172.6px">Ford Transit 10</div>
<div class="c b" style="left:240.19999999999982px;top:172.6px">Для логистики</div>
<div class="c" style="left:437.79999999999995px;top:172.6px">2.00 tn</div>
<div class="c" style="left:504.0px;top:172.6px">4.00 m³</div>
<div class="hl" style="left:0;top:232.2px;width:640px"></div>
<div class="cb" style="left:15.199999999999818px;top:203.8px;width:16.4px;height:16px;border-width:1.7px;border-radius:2px"></div>
<div class="c b" style="left:42.0px;top:206.0px">Ford Transit 20</div>
<div class="c b" style="left:240.19999999999982px;top:206.0px">Для логистики</div>
<div class="c" style="left:437.79999999999995px;top:206.0px">1.50 tn</div>
<div class="c" style="left:504.0px;top:206.0px">4.00 m³</div>
<div class="hl" style="left:0;top:265.5px;width:640px"></div>
<div class="cb" style="left:15.199999999999818px;top:237.2px;width:16.4px;height:16px;border-width:1.7px;border-radius:2px"></div>
<div class="c b" style="left:42.0px;top:239.4px">Ford Transit 3</div>
<div class="c b" style="left:240.19999999999982px;top:239.4px">Для логистики</div>
<div class="c" style="left:437.79999999999995px;top:239.4px">1.10 tn</div>
<div class="c" style="left:504.0px;top:239.4px">7.00 m³</div>
<div class="hl" style="left:0;top:298.9px;width:640px"></div>
<div class="cb" style="left:15.199999999999818px;top:270.5px;width:16.4px;height:16px;border-width:1.7px;border-radius:2px"></div>
<div class="c b" style="left:42.0px;top:272.7px">Ford Transit 4</div>
<div class="c b" style="left:240.19999999999982px;top:272.7px">Для логистики</div>
<div class="c" style="left:437.79999999999995px;top:272.7px">1.10 tn</div>
<div class="c" style="left:504.0px;top:272.7px">8.26 m³</div>
<div class="hl" style="left:0;top:332.2px;width:640px"></div>
<div class="cb" style="left:15.199999999999818px;top:303.9px;width:16.4px;height:16px;border-width:1.7px;border-radius:2px"></div>
<div class="c b" style="left:42.0px;top:306.1px">Ford Transit 7</div>
<div class="c b" style="left:240.19999999999982px;top:306.1px">Для логистики</div>
<div class="c" style="left:437.79999999999995px;top:306.1px">1.10 tn</div>
<div class="c" style="left:504.0px;top:306.1px">7.65 m³</div>
<div class="hl" style="left:0;top:365.6px;width:640px"></div>
<div class="cb" style="left:15.199999999999818px;top:337.2px;width:16.4px;height:16px;border-width:1.7px;border-radius:2px"></div>
<div class="c b" style="left:42.0px;top:339.4px">Ford Transit 9</div>
<div class="c b" style="left:240.19999999999982px;top:339.4px">Для логистики</div>
<div class="c" style="left:437.79999999999995px;top:339.4px">1.10 tn</div>
<div class="c" style="left:504.0px;top:339.4px">8.00 m³</div>
<div class="hl" style="left:0;top:399.0px;width:640px"></div>
<div class="cb" style="left:15.199999999999818px;top:370.6px;width:16.4px;height:16px;border-width:1.7px;border-radius:2px"></div>
<div class="c b" style="left:42.0px;top:372.8px">Ford Transit 1</div>
<div class="c b" style="left:240.19999999999982px;top:372.8px">Для логистики</div>
<div class="c" style="left:437.79999999999995px;top:372.8px">1.10 tn</div>
<div class="c" style="left:504.0px;top:372.8px">54.00 ...</div>
<div class="hl" style="left:0;top:432.3px;width:640px"></div>
<div class="cb" style="left:15.199999999999818px;top:404.0px;width:16.4px;height:16px;border-width:1.7px;border-radius:2px"></div>
<div class="c b" style="left:42.0px;top:406.2px">Ford Transit 15</div>
<div class="c b" style="left:240.19999999999982px;top:406.2px">Для логистики</div>
<div class="c" style="left:437.79999999999995px;top:406.2px">1.10 tn</div>
<div class="c" style="left:504.0px;top:406.2px">4.00 m³</div>
</div>
<div class="abs" style="left:2135.4px;top:151px;width:23.6px;height:424px;background:#f1f1f1"></div>
<div class="abs" style="left:2137.2000000000003px;top:175.4px;width:20.6px;height:164.6px;background:#c1c1c1"></div>
<svg class="abs" style="left:2141.2000000000003px;top:160px" width="12" height="7" viewBox="0 0 12 7"><path d="M0 6.6 H12 L6 0.4 Z" fill="#a3a3a3"/></svg>
<svg class="abs" style="left:2141.2000000000003px;top:560px" width="12" height="7" viewBox="0 0 12 7"><path d="M0 0.4 H12 L6 6.6 Z" fill="#505050"/></svg>
<div class="abs" style="left:833px;top:575px;width:1326px;height:41.2px;background:#eeeeee"></div>
<svg class="abs" style="left:1453.4px;top:590.6px" width="5.6" height="12" viewBox="0 0 5.6 12"><path d="M2.8 0 L5.6 3.6 H4 V12 H1.6 V3.6 H0 Z" fill="#111"/></svg>
<svg class="abs" style="left:1537.8px;top:590.6px" width="5.6" height="12" viewBox="0 0 5.6 12"><path d="M2.8 0 L5.6 3.6 H4 V12 H1.6 V3.6 H0 Z" fill="#111"/></svg>
<div class="c" style="left:1465.2px;top:586.8px;font-size:15.75px;-webkit-text-stroke:.35px #111;color:#111">Distribute</div>
<svg class="abs" style="left:1490.6px;top:621.2px" width="11.6" height="6" viewBox="0 0 12 6"><path d="M0 0 H12 L6 6 Z" fill="#111"/></svg>
<div class="abs" style="left:833px;top:628px;width:1326px;height:38px;background:#066ea5"></div>
<svg style="position:absolute;left:1198.4px;top:638px" width="24.5" height="19.8" viewBox="0 0 24.5 19.8" ><path d="M23.4 1.2 L15.2 7.6" stroke="#fff" stroke-width="2.5" stroke-linecap="round" fill="none"/><path d="M11.2 5.6 L16.6 11.4 L15.2 12.6 L9.8 6.8 Z" fill="#fff"/><path d="M8.8 7.6 L14.4 13.4 C13 17.6 7.6 19.8 0.4 19.4 C3.4 16.8 3 10.6 8.8 7.6 Z" fill="#fff"/></svg>
<div class="c b" style="left:1227.6px;top:637px;color:#fff;font-size:15.2px">Clear map</div>
<svg style="position:absolute;left:1328.4px;top:639.2px" width="17.6" height="16.8" viewBox="0 0 17.6 16.8" ><path d="M2.3 2.3 L15.3 2.3 L9.6 8.4 L15.3 14.5 L2.3 14.5 Z" fill="none" stroke="#fff" stroke-width="2.3" stroke-linejoin="round"/><circle cx="2.3" cy="2.3" r="2.2" fill="#fff"/><circle cx="2.3" cy="2.3" r="0.8" fill="#066ea5"/><circle cx="15.3" cy="2.3" r="2.2" fill="#fff"/><circle cx="15.3" cy="2.3" r="0.8" fill="#066ea5"/><circle cx="15.3" cy="14.5" r="2.2" fill="#fff"/><circle cx="15.3" cy="14.5" r="0.8" fill="#066ea5"/><circle cx="2.3" cy="14.5" r="2.2" fill="#fff"/><circle cx="2.3" cy="14.5" r="0.8" fill="#066ea5"/></svg>
<div class="c b" style="left:1356px;top:637px;color:#fff;font-size:15.2px">Select on map</div>
<svg style="position:absolute;left:1482.6px;top:639px" width="22.6" height="17.6" viewBox="0 0 22.6 17.6" ><rect x="1.6" y="1.6" width="14" height="9" fill="#fff"/><rect x="0.10000000000000009" y="0.10000000000000009" width="3" height="3" fill="#fff"/><rect x="14.1" y="0.10000000000000009" width="3" height="3" fill="#fff"/><rect x="0.10000000000000009" y="9.1" width="3" height="3" fill="#fff"/><rect x="14.1" y="9.1" width="3" height="3" fill="#fff"/><rect x="8" y="7.8" width="13" height="8.2" fill="#fff" stroke="#066ea5" stroke-width="0.9"/><rect x="6.5" y="6.3" width="3" height="3" fill="#fff"/><rect x="19.5" y="6.3" width="3" height="3" fill="#fff"/><rect x="6.5" y="14.5" width="3" height="3" fill="#fff"/><rect x="19.5" y="14.5" width="3" height="3" fill="#fff"/></svg>
<div class="c b" style="left:1512px;top:637px;color:#fff;font-size:15.2px">Select on map</div>
<svg style="position:absolute;left:1638.6px;top:636px" width="21.6" height="21.4" viewBox="0 0 24 22" ><path d="M12 0.6 L23.4 5.8 L12 11 L0.6 5.8 Z" fill="#fff"/><path d="M3.8 9.4 L0.6 10.9 L12 16.1 L23.4 10.9 L20.2 9.4 L12 13.2 Z" fill="#fff"/><path d="M3.8 14.5 L0.6 16 L12 21.2 L23.4 16 L20.2 14.5 L12 18.3 Z" fill="#fff"/></svg>
<div class="c b" style="left:1668.4px;top:637px;color:#fff;font-size:15.2px">Show geozones</div>
<svg style="position:absolute;left:2126.6px;top:643.4px" width="11.4" height="7.4" viewBox="0 0 12 8" ><path d="M1 1.2 L6 6.4 L11 1.2" fill="none" stroke="#fff" stroke-width="1.9"/></svg>
<div class="abs" style="left:833px;top:666px;width:1326px;height:216px;background:#f2efe9;overflow:hidden" id="map">
<svg class="abs" style="left:0;top:0" width="1326" height="216" viewBox="0 0 1326 216"><defs><linearGradient id="gl" x1="0" x2="1" y1="0" y2="0"><stop offset="0" stop-color="#ebf0e3"/><stop offset="0.28" stop-color="#ecf0e4"/><stop offset="0.5" stop-color="#eff1e8"/><stop offset="0.72" stop-color="#f2f0e9"/><stop offset="1" stop-color="#f2efe9"/></linearGradient><filter id="bl" x="-30%" y="-30%" width="160%" height="160%"><feGaussianBlur stdDeviation="10"/></filter></defs><rect x="0" y="0" width="1326" height="216" fill="url(#gl)"/><ellipse cx="300" cy="70" rx="70" ry="40" fill="#dbe9cf" filter="url(#bl)"/><ellipse cx="240" cy="20" rx="60" ry="22" fill="#dfebd3" filter="url(#bl)"/><ellipse cx="420" cy="55" rx="50" ry="30" fill="#dfebd3" filter="url(#bl)"/><ellipse cx="90" cy="140" rx="70" ry="30" fill="#e2ecd6" filter="url(#bl)"/><ellipse cx="40" cy="30" rx="50" ry="30" fill="#e3edd8" filter="url(#bl)"/><ellipse cx="160" cy="200" rx="110" ry="22" fill="#dfead2" filter="url(#bl)"/><ellipse cx="520" cy="40" rx="50" ry="30" fill="#e6eedb" filter="url(#bl)"/><ellipse cx="640" cy="70" rx="40" ry="40" fill="#ebf0e0" filter="url(#bl)"/><ellipse cx="1141" cy="30" rx="40" ry="28" fill="#e3edd6" filter="url(#bl)"/><ellipse cx="1020" cy="55" rx="60" ry="16" fill="#ecf1e2" filter="url(#bl)"/><path d="M862 181 H982 L987 196 L957 210 L910 216 H872 Z" fill="#f4ebc8" opacity="0.85"/><path d="M221 0 L225 29 L224 57 L230 81 L239 103 L234 117 L215 137 L203 157 L202 174" fill="none" stroke="#b3c2ad" stroke-width="1.5" opacity="0.9" stroke-linejoin="round"/><path d="M224 57 L245 53 L269 51 L294 53 L316 59 L326 65 L348 62 L377 66 L392 71 L414 66 L421 49 L431 37 L442 44 L457 44 L464 37 L491 34 L515 54 L515 78 L545 86 L547 103 L569 120 L601 115 L623 132 L650 142 L675 152 L677 167 L665 176 L670 196 L670 216" fill="none" stroke="#b3c2ad" stroke-width="1.5" opacity="0.9" stroke-linejoin="round"/><path d="M431 37 L436 20 L452 8 L460 0" fill="none" stroke="#b3c2ad" stroke-width="1.5" opacity="0.9" stroke-linejoin="round"/><path d="M0 98 L24 127 L64 137 L81 157 L115 159 L137 169 L157 159 L186 169 L203 174 L196 186 L186 196 L188 216" fill="none" stroke="#bcc8b5" stroke-width="1.3" opacity="0.9" stroke-linejoin="round"/><path d="M878 216 L853 196 L858 171 L868 147 L870 127 L884 117.5 L901 142 L916 132 L908.5 107.7 L928 98 L933 83 L964.8 68.6 L967 58.8 L1008.9 58.8 L1013.8 68.6 L1040.7 71 L1055.4 85.7 L1070 98 L1067.6 110 L1075 93 L1102 110 L1116.6 93 L1153.3 90.6 L1173 85.7 L1185 98 L1204.8 110 L1226.8 100.4 L1258.6 98 L1263.5 80.8 L1246.4 68.6 L1229 58.8 L1222 44 L1244 19.6 L1256 0" fill="none" stroke="#b3c2ad" stroke-width="1.6" opacity="0.9" stroke-linejoin="round"/><path d="M60 0 L72 40 L58 80 L44 98" fill="none" stroke="#cdd3c4" stroke-width="1" opacity="0.85" stroke-linejoin="round"/><path d="M112 30 L128 70 L110 110 L115 159" fill="none" stroke="#cdd3c4" stroke-width="1" opacity="0.85" stroke-linejoin="round"/><path d="M150 60 L175 90 L160 130 L157 159" fill="none" stroke="#cdd3c4" stroke-width="1" opacity="0.85" stroke-linejoin="round"/><path d="M175 90 L224 100" fill="none" stroke="#cdd3c4" stroke-width="1" opacity="0.85" stroke-linejoin="round"/><path d="M330 65 L322 100 L296 120 L300 160 L280 190 L290 216" fill="none" stroke="#cdd3c4" stroke-width="1" opacity="0.85" stroke-linejoin="round"/><path d="M392 71 L380 110 L400 140 L384 180 L396 216" fill="none" stroke="#cdd3c4" stroke-width="1" opacity="0.85" stroke-linejoin="round"/><path d="M240 120 L296 120" fill="none" stroke="#cdd3c4" stroke-width="1" opacity="0.85" stroke-linejoin="round"/><path d="M300 160 L384 150" fill="none" stroke="#cdd3c4" stroke-width="1" opacity="0.85" stroke-linejoin="round"/><path d="M515 78 L500 110 L470 130 L476 170 L456 190" fill="none" stroke="#cdd3c4" stroke-width="1" opacity="0.85" stroke-linejoin="round"/><path d="M547 103 L560 150 L600 170 L610 216" fill="none" stroke="#cdd3c4" stroke-width="1" opacity="0.85" stroke-linejoin="round"/><path d="M476 170 L560 160" fill="none" stroke="#cdd3c4" stroke-width="1" opacity="0.85" stroke-linejoin="round"/><path d="M491 34 L520 20 L540 0" fill="none" stroke="#cdd3c4" stroke-width="1" opacity="0.85" stroke-linejoin="round"/><path d="M611 0 L616 30 L600 50 L626 62 L623 80 L650 96 L640 120 L650 142" fill="none" stroke="#cdd3c4" stroke-width="1" opacity="0.85" stroke-linejoin="round"/><path d="M626 62 L670 44 L700 52 L730 80 L720 110 L710 130 L677 152" fill="none" stroke="#cdd3c4" stroke-width="1" opacity="0.85" stroke-linejoin="round"/><path d="M670 44 L690 20 L680 0" fill="none" stroke="#cdd3c4" stroke-width="1" opacity="0.85" stroke-linejoin="round"/><path d="M730 80 L760 84 L790 70 L800 40 L830 30 L840 0" fill="none" stroke="#cdd3c4" stroke-width="1" opacity="0.85" stroke-linejoin="round"/><path d="M720 110 L740 150 L730 190 L760 216" fill="none" stroke="#cdd3c4" stroke-width="1" opacity="0.85" stroke-linejoin="round"/><path d="M760 84 L770 110 L820 120 L826 105" fill="none" stroke="#cdd3c4" stroke-width="1" opacity="0.85" stroke-linejoin="round"/><path d="M964.8 68.6 L950 30 L920 20 L915 0" fill="none" stroke="#cdd3c4" stroke-width="1" opacity="0.85" stroke-linejoin="round"/><path d="M1008.9 58.8 L1030 30 L1020 0" fill="none" stroke="#cdd3c4" stroke-width="1" opacity="0.85" stroke-linejoin="round"/><path d="M1067.6 110 L1060 150 L1040 170 L1060 190 L1080 216" fill="none" stroke="#cdd3c4" stroke-width="1" opacity="0.85" stroke-linejoin="round"/><path d="M1263.5 80.8 L1290 120 L1300 170 L1326 200" fill="none" stroke="#cdd3c4" stroke-width="1" opacity="0.85" stroke-linejoin="round"/><path d="M1185 98 L1200 150 L1190 216" fill="none" stroke="#cdd3c4" stroke-width="1" opacity="0.85" stroke-linejoin="round"/><path d="M412 68 L414 82 L418 100 L428 118 L440 134 L452 150 L468 164 L484 172" fill="none" stroke="#a7cfe6" stroke-width="2.6" stroke-linecap="round" stroke-linejoin="round"/><path d="M901 7 L894 24 L889 41" fill="none" stroke="#a7cfe6" stroke-width="2.4" stroke-linecap="round" stroke-linejoin="round"/><path d="M843.6 61 L834 81 L826 105 L834 122 L819 147 L804 176 L768 196 L758 215" fill="none" stroke="#a7cfe6" stroke-width="2" stroke-linecap="round" stroke-linejoin="round"/><path d="M835 122 L845 121" fill="none" stroke="#a7cfe6" stroke-width="1.4" stroke-linecap="round" stroke-linejoin="round"/><ellipse cx="852" cy="170" rx="3" ry="2.4" fill="#a7cfe6"/><rect x="0" y="178.4" width="1326" height="1.6" fill="#ffffff"/><circle cx="153" cy="1" r="2" fill="#f6f4ee" stroke="#8a8a8a" stroke-width="0.9"/><circle cx="195.79999999999995" cy="81.60000000000002" r="2" fill="#f6f4ee" stroke="#8a8a8a" stroke-width="0.9"/><circle cx="564.4000000000001" cy="3" r="2" fill="#f6f4ee" stroke="#8a8a8a" stroke-width="0.9"/><circle cx="434" cy="68.79999999999995" r="2" fill="#f6f4ee" stroke="#8a8a8a" stroke-width="0.9"/><circle cx="272" cy="102" r="2" fill="#f6f4ee" stroke="#8a8a8a" stroke-width="0.9"/><circle cx="363.5999999999999" cy="122.60000000000002" r="2" fill="#f6f4ee" stroke="#8a8a8a" stroke-width="0.9"/><circle cx="236" cy="130.39999999999998" r="2" fill="#f6f4ee" stroke="#8a8a8a" stroke-width="0.9"/><circle cx="530.2" cy="94" r="2" fill="#f6f4ee" stroke="#8a8a8a" stroke-width="0.9"/><circle cx="523" cy="151" r="2" fill="#f6f4ee" stroke="#8a8a8a" stroke-width="0.9"/><circle cx="357.4000000000001" cy="166.60000000000002" r="2" fill="#f6f4ee" stroke="#8a8a8a" stroke-width="0.9"/><circle cx="124" cy="132" r="2" fill="#f6f4ee" stroke="#8a8a8a" stroke-width="0.9"/><circle cx="289" cy="205" r="2" fill="#f6f4ee" stroke="#8a8a8a" stroke-width="0.9"/><circle cx="982.5999999999999" cy="82" r="2" fill="#f6f4ee" stroke="#8a8a8a" stroke-width="0.9"/><circle cx="1142.6" cy="121" r="2" fill="#f6f4ee" stroke="#8a8a8a" stroke-width="0.9"/><circle cx="45" cy="85" r="2" fill="#f6f4ee" stroke="#8a8a8a" stroke-width="0.9"/><circle cx="153" cy="36.60000000000002" r="3.4" fill="none" stroke="#777" stroke-width="0.9"/><circle cx="153" cy="36.60000000000002" r="1.2" fill="#777"/><circle cx="413" cy="115" r="3.4" fill="none" stroke="#777" stroke-width="0.9"/><circle cx="413" cy="115" r="1.2" fill="#777"/></svg>
<div class="abs" style="left:0;top:0;width:1326px;height:216px;opacity:.999">
<div class="ml" style="left:42.0px;top:-3.0px;">Poznań -<br>Posen</div>
<div class="ml" style="left:191.6px;top:20.4px;">Warschau<br>- Warszawa</div>
<div class="ml" style="left:196.0px;top:62.6px;">Lublin</div>
<div class="ml" style="left:271.0px;top:84.4px;">Луцьк - Luzk</div>
<div class="ml" style="left:320.6px;top:107.0px;text-align:right">Житомир<br>- Schytomyr</div>
<div class="ml" style="left:413.0px;top:118.6px;">Kiew - Київ</div>
<div class="ml" style="left:434.6px;top:71.8px;">Чернігів<br>- Tschernihiw</div>
<div class="ml" style="left:530.4px;top:97.4px;">Суми - Sumy</div>
<div class="ml" style="left:565.0px;top:8.4px;">Орёл - Orjol</div>
<div class="ml" style="left:41.0px;top:87.2px;text-align:right">Wrocław<br>- Breslau</div>
<div class="ml" style="left:124.0px;top:97.4px;">Kraków -<br>Krakau</div>
<div class="ml" style="left:236.0px;top:142.8px;">Львів - Lemberg</div>
<div class="ml" style="left:491.0px;top:135.2px;">Полтава<br>- Poltawa</div>
<div class="ml" style="left:357.6px;top:167.6px;">Вінниця<br>- Winnyzja</div>
<div class="ml" style="left:246.4px;top:189.4px;text-align:right">Чернівці<br>- Czernowitz</div>
<div class="ml" style="left:982.6px;top:64.6px;">Орал - Oral</div>
<div class="ml" style="left:1142.6px;top:124.0px;">Ақтөбе -<br>Aqtöbe</div>
<div class="ml" style="left:1191.6px;top:0.6px;">- Magnitogorsk</div>
<div class="ml" style="left:1317.0px;top:-3.6px;">Қостанай<br>- Kostanai</div>
<div class="ml" style="left:8.0px;top:124.6px;">Tschechien</div>
<div class="ml" style="left:0.6px;top:142.0px;">Česko</div>
<div class="mb" style="left:101.6px;top:23.6px;">Polen<br>Polska</div>
<div class="mb" style="left:116.6px;top:171.0px;">Slowakei<br>Slovensko</div>
<div class="mb" style="left:504.0px;top:180.6px;">Ukraine<br>Україна</div>
<div class="mi" style="left:269.6px;top:-15.6px;">Woblast<br>Woblast<br>Brest<br>Брэсцкая<br>вобласць</div>
<div class="mi" style="left:384.0px;top:5.0px;">Woblast<br>Homel<br>Гомельская<br>вобласць</div>
<div class="mi" style="left:486.0px;top:-8.6px;">Brjansk<br>Брянская<br>область</div>
<div class="mi" style="left:567.8px;top:33.6px;">Oblast<br>Kursk<br>Курская<br>область</div>
<div class="mi" style="left:581.0px;top:127.0px;">Oblast<br>Charkiw<br>Харківська<br>область</div>
<div class="mi" style="left:674.6px;top:69.6px;">Oblast<br>Woronesch<br>Воронежская<br>область</div>
<div class="mi" style="left:714.8px;top:1.0px;">Tambow<br>Тамбовская<br>область</div>
<div class="mi" style="left:799.8px;top:-4.6px;">Пензенская<br>область</div>
<div class="mi" style="left:949.0px;top:-8.4px;">Самарская<br>область</div>
<div class="mi" style="left:852.4px;top:48.2px;">Oblast<br>Saratow<br>Саратовская<br>область</div>
<div class="mi" style="left:792.6px;top:132.4px;">Oblast<br>Wolgograd<br>Волгоградская<br>область</div>
<div class="mi" style="left:698.6px;top:183.8px;">Oblast<br>Rostow</div>
<div class="mi" style="left:988.8px;top:103.0px;">Gebiet<br>Westkasachstan<br>Батыс<br>Қазақстан<br>облысы</div>
<div class="mi" style="left:1040.8px;top:-1.6px;">Oblast<br>Orenburg<br>Оренбургская<br>область</div>
<div class="mi" style="left:1308.0px;top:38.8px;">Gebiet<br>Qostanai<br>Қостанай<br>облысы</div>
<div class="mi" style="left:1201.8px;top:175.8px;">Gebiet<br>Aqtöbe<br>Ақтөбе</div>
<div class="mi" style="left:992.0px;top:206.6px;">Gebiet</div>
</div>
</div>
<div class="mapbtn" style="top:677.8px"></div>
<div class="mapbtn" style="top:715px"></div>
<div class="mapbtn" style="top:763.4px"></div>
<div class="mapbtn" style="top:811.4px"></div>
<div class="mapbtn" style="top:859.4px"></div>
<svg class="abs" style="left:855.4px;top:687.4px" width="16.4" height="16.4" viewBox="0 0 16 16"><path d="M8 0.6 V15.4 M0.6 8 H15.4" stroke="#fff" stroke-width="2.3"/></svg>
<svg class="abs" style="left:855.4px;top:731.6px" width="16.4" height="2.4" viewBox="0 0 16 2.4"><rect width="16" height="2.2" fill="#fff"/></svg>
<svg style="transform:scaleX(-1);position:absolute;left:852.6px;top:770.2px" width="22" height="22" viewBox="0 0 22 22" ><g transform="rotate(45 11 11)"><rect x="7.2" y="-2" width="7.6" height="26" rx="1" fill="#fff"/><rect x="7.2" y="1.2" width="3.2" height="1.3" fill="#066ea5"/><rect x="7.2" y="5.8" width="3.2" height="1.3" fill="#066ea5"/><rect x="7.2" y="10.399999999999999" width="3.2" height="1.3" fill="#066ea5"/><rect x="7.2" y="14.999999999999998" width="3.2" height="1.3" fill="#066ea5"/><rect x="7.2" y="19.599999999999998" width="3.2" height="1.3" fill="#066ea5"/></g><g transform="rotate(-45 11 11)"><rect x="7.4" y="-2.6" width="7.2" height="20.6" fill="#fff" stroke="#066ea5" stroke-width="1.3"/><path d="M7.4 19.4 H14.6 L11 25.4 Z" fill="#fff" stroke="#066ea5" stroke-width="0.8"/><rect x="7.4" y="1.2" width="7.2" height="1.3" fill="#066ea5"/></g></svg>
<svg style="position:absolute;left:851px;top:816.4px" width="25.4" height="25.4" viewBox="0 0 22 22" ><path d="M3.4 3 L19 5.2 L17.4 17.6 L4.4 19 Z" fill="none" stroke="#fff" stroke-width="1.9"/><circle cx="3.4" cy="3" r="2.3" fill="#066ea5" stroke="#fff" stroke-width="1.52"/><circle cx="19" cy="5.2" r="2.3" fill="#066ea5" stroke="#fff" stroke-width="1.52"/><circle cx="17.4" cy="17.6" r="2.3" fill="#066ea5" stroke="#fff" stroke-width="1.52"/><circle cx="4.4" cy="19" r="2.3" fill="#066ea5" stroke="#fff" stroke-width="1.52"/></svg>
<svg style="position:absolute;left:853px;top:869.4px" width="22" height="22" viewBox="0 0 22 22" ><path d="M4.4 0 H15 L17.6 2.6 V7 H4.4 Z" fill="#fff"/><rect x="0" y="8" width="22" height="10" rx="2" fill="#fff"/><rect x="4.4" y="13" width="13.2" height="8" fill="#066ea5" stroke="#fff" stroke-width="1.6"/></svg>
<div class="abs" style="left:1890.2px;top:678.2px;width:103.4px;height:25.8px;background:#fff;border:1px solid #b4b4b4;border-radius:2px"></div>
<div class="cbs" style="left:1899.2px;top:683.8px;width:14px;height:14px;border-width:1.2px;border-radius:3px"></div>
<div class="c" style="left:1918px;top:681px;font-size:13.1px;color:#222;opacity:.999;transform:translateY(.6px) scaleY(1.04)">Street view</div>
<div class="abs" style="left:2006.2px;top:678.2px;width:76.6px;height:25.8px;background:#fff;border:1px solid #b4b4b4;border-radius:2px"></div>
<div class="cbs" style="left:2014.2px;top:683.8px;width:14px;height:14px;border-width:1.2px;border-radius:3px"></div>
<div class="c" style="left:2033.2px;top:681px;font-size:13.1px;color:#222;opacity:.999;transform:translateY(.6px) scaleY(1.04)">Traffic</div>
<div class="abs" style="left:2094.8px;top:677.6px;width:53.6px;height:39.5px;background:#fff;box-shadow:0 0 1.5px rgba(0,0,0,.18);border-radius:1.5px"></div>
<svg class="abs" style="left:2106px;top:683px" width="31.2" height="30.4" viewBox="0 0 31.2 30.4"><path d="M15.5 10.3 L31 20 L15.5 29.7 L0 20 Z" fill="#c2c2c2"/><path d="M0 20 L15.5 29.7 L31 20" fill="none" stroke="#7d7d7d" stroke-width="0.9"/><path d="M15.5 5.100000000000001 L31 14.8 L15.5 24.5 L0 14.8 Z" fill="#d2d2d2"/><path d="M0 14.8 L15.5 24.5 L31 14.8" fill="none" stroke="#7d7d7d" stroke-width="0.9"/><path d="M15.5 0.0 L31 9.7 L15.5 19.4 L0 9.7 Z" fill="#efefef"/><path d="M0 9.7 L15.5 19.4 L31 9.7" fill="none" stroke="#7d7d7d" stroke-width="0.9"/><path d="M15.5 5.2 L26 11.6 L15.5 18.2 L5 11.6 Z" fill="#dddddd"/></svg>
</body></html>
